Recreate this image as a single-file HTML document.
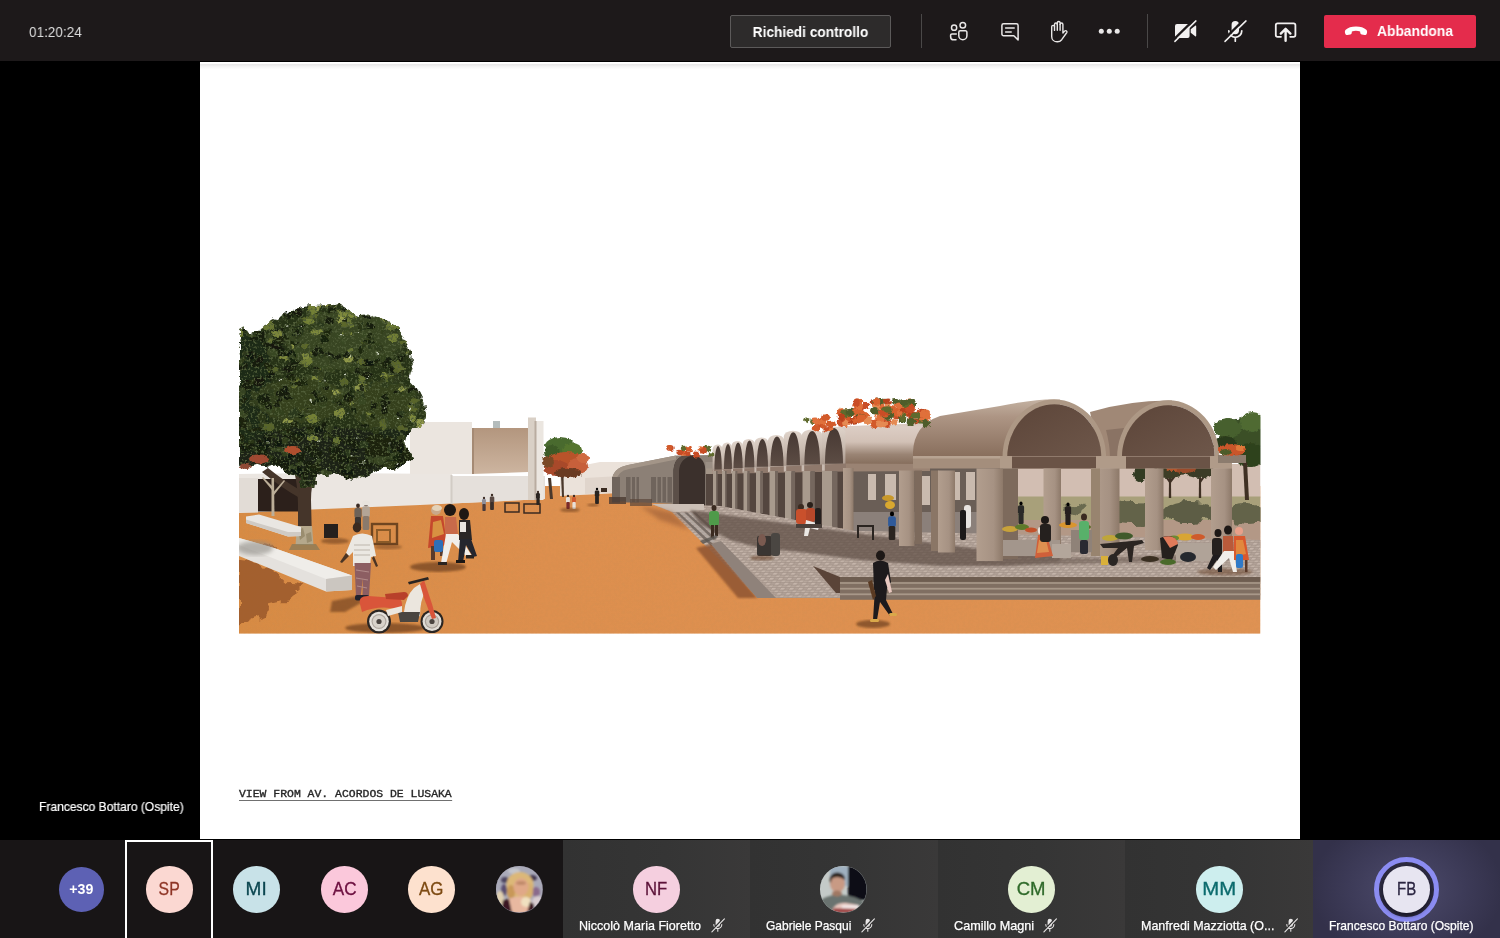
<!DOCTYPE html>
<html lang="it">
<head>
<meta charset="utf-8">
<title>Riunione</title>
<style>
*{box-sizing:border-box;margin:0;padding:0}
html,body{width:1500px;height:938px;overflow:hidden;background:#000}
body{font-family:"Liberation Sans","DejaVu Sans",sans-serif;color:#fff;position:relative}
#top{position:absolute;left:0;top:0;width:1500px;height:61.200px;background:#1d191a}
#time{position:absolute;left:28.600px;top:24.030px;font-size:15.200px;line-height:1;color:#dcdcdc;transform:scaleX(.892);transform-origin:0 0;white-space:nowrap}
#req{position:absolute;left:730px;top:14.500px;width:161px;height:33px;border:1px solid #5c5a5a;background:#2d2b2b;border-radius:2px}
#req span{position:absolute;left:0;top:8.530px;width:159px;text-align:center;font-size:15.080px;font-weight:bold;line-height:1;color:#fff;transform:scaleX(.908);white-space:nowrap}
.sep{position:absolute;top:14px;width:1px;height:34px;background:#4a4848}
.ico{position:absolute;top:19px;width:24px;height:24px}
#leave{position:absolute;left:1324px;top:14.500px;width:152px;height:33px;background:#e42c4c;border-radius:2px}
#leave span{position:absolute;left:53px;top:9.780px;font-size:14.200px;font-weight:bold;line-height:1;color:#fff;transform:scaleX(.973);transform-origin:0 0;white-space:nowrap}
#stage{position:absolute;left:0;top:61px;width:1500px;height:779px;background:#000}
#slide{position:absolute;left:199.700px;top:62.400px;width:1100.200px;height:776.800px;background:linear-gradient(#fff 0,#fff 1.400px,#e8e8e8 2.600px,#f4f4f4 4.500px,#fff 7.500px)}
#presenter{-webkit-text-stroke:.2px #fff;position:absolute;left:39.300px;top:801.400px;font-size:12.600px;line-height:1;color:#fff;transform:scaleX(.957);transform-origin:0 0;white-space:nowrap}
#cap{position:absolute;left:238.900px;top:789.100px;height:11.750px;-webkit-text-stroke:.35px #262626;font-family:"Liberation Mono","DejaVu Sans Mono",monospace;font-size:10.900px;line-height:1;color:#262626;transform:scaleX(1.050);transform-origin:0 0;white-space:nowrap;border-bottom:1.200px solid #707070;will-change:transform}
#strip{position:absolute;left:0;top:839.500px;width:1500px;height:98.500px;background:#181516}
.tile{position:absolute;top:0;width:187.5px;height:98.500px;background:linear-gradient(90deg,#323232 0,#353535 55%,#3a3939 100%)}
.av{position:absolute;width:46.500px;height:46.500px;border-radius:50%;top:26.100px;font-size:18.200px;-webkit-text-stroke:.3px currentColor;line-height:46.500px;text-align:center}
.av b{display:inline-block;font-weight:normal}
.nm{-webkit-text-stroke:.25px #fff;position:absolute;left:16px;top:80.600px;font-size:12.600px;line-height:1;color:#fff;white-space:nowrap}
.nm span{display:inline-block;transform-origin:0 0}

#sel{position:absolute;left:124.800px;top:0;width:87.800px;height:98.500px;border:2px solid #fff;border-bottom:none}
#fb{background:radial-gradient(ellipse 95px 75px at 94px 49px,#4d4b6c 0%,#3d3b58 60%,#33314a 100%)}
#ring{position:absolute;left:61.500px;top:17.500px;width:65px;height:65px;border-radius:50%;border:5px solid #8b8cf2;background:#2c2a40}
.m{position:absolute;top:-2.200px;margin-left:-16px}
#time,#req span,#leave span,#presenter,.nm,.av{will-change:transform}
</style>
</head>
<body>
<div id="stage"></div>
<div id="slide"></div>
<!--SCENE--><svg id="scene" width="1500" height="938" viewBox="0 0 1500 938" style="position:absolute;left:0;top:0"><defs>
<clipPath id="imgclip"><rect x="239" y="296" width="1021.5" height="337.8"/></clipPath>
<linearGradient id="gnd" x1="0" y1="0" x2="1" y2="0"><stop offset="0" stop-color="#d78b44"/><stop offset=".3" stop-color="#dd8f4e"/><stop offset="1" stop-color="#df9253"/></linearGradient>
<linearGradient id="vault" x1="0" y1="0" x2="0" y2="1"><stop offset="0" stop-color="#c4b2a2"/><stop offset=".3" stop-color="#ad9584"/><stop offset="1" stop-color="#876d5b"/></linearGradient>
<linearGradient id="roof" x1="0" y1="0" x2="0" y2="1"><stop offset="0" stop-color="#d6c6bb"/><stop offset=".1" stop-color="#dccdc4"/><stop offset=".45" stop-color="#d2c1b6"/><stop offset=".75" stop-color="#9a8474"/><stop offset="1" stop-color="#846c5a"/></linearGradient>
<linearGradient id="face" x1="0" y1="0" x2="0" y2="1"><stop offset="0" stop-color="#e0d4cb"/><stop offset=".5" stop-color="#c9bbb0"/><stop offset="1" stop-color="#a08f84"/></linearGradient>
<linearGradient id="archin" x1="0" y1="0" x2="0" y2="1"><stop offset="0" stop-color="#473933"/><stop offset="1" stop-color="#5c4c44"/></linearGradient>
<linearGradient id="inner" x1="0" y1="0" x2="1" y2="1"><stop offset="0" stop-color="#5c4539"/><stop offset="1" stop-color="#6e574a"/></linearGradient>
<linearGradient id="col" x1="0" y1="0" x2="1" y2="0"><stop offset="0" stop-color="#b29e8e"/><stop offset=".65" stop-color="#a69283"/><stop offset="1" stop-color="#8d7969"/></linearGradient>
<linearGradient id="tan" x1="0" y1="0" x2="0" y2="1"><stop offset="0" stop-color="#b3967e"/><stop offset="1" stop-color="#cdb5a0"/></linearGradient>
<filter id="leaf" x="-5%" y="-5%" width="110%" height="110%"><feTurbulence type="fractalNoise" baseFrequency=".16" numOctaves="2" seed="3" result="n"/><feDisplacementMap in="SourceGraphic" in2="n" scale="7" xChannelSelector="R" yChannelSelector="G"/></filter>
<filter id="leaf2" x="-10%" y="-10%" width="120%" height="120%"><feTurbulence type="fractalNoise" baseFrequency=".3" numOctaves="2" seed="5" result="n"/><feDisplacementMap in="SourceGraphic" in2="n" scale="4" xChannelSelector="R" yChannelSelector="G"/></filter>
<filter id="grain" x="0" y="0" width="100%" height="100%"><feTurbulence type="fractalNoise" baseFrequency=".35" numOctaves="2" seed="11"/><feColorMatrix type="matrix" values="0 0 0 0 .55  0 0 0 0 .28  0 0 0 0 .1  0 0 0 1.200 -.5"/></filter>
<filter id="speck" x="0" y="0" width="100%" height="100%"><feTurbulence type="fractalNoise" baseFrequency=".45" numOctaves="2" seed="9"/><feColorMatrix type="matrix" values="0 0 0 0 .08  0 0 0 0 .11  0 0 0 0 .04  0 0 0 5 -2.600"/></filter>
<filter id="dapple" x="-10%" y="-10%" width="120%" height="120%"><feTurbulence type="fractalNoise" baseFrequency=".09" numOctaves="2" seed="4" result="n"/><feDisplacementMap in="SourceGraphic" in2="n" scale="14" xChannelSelector="R" yChannelSelector="G"/><feGaussianBlur stdDeviation=".7"/></filter>
<filter id="blur2"><feGaussianBlur stdDeviation="2"/></filter>
<filter id="blur1"><feGaussianBlur stdDeviation="1"/></filter>
<filter id="blur05"><feGaussianBlur stdDeviation=".5"/></filter>
<pattern id="tiles" width="9" height="5" patternUnits="userSpaceOnUse" patternTransform="skewX(-35)"><rect width="9" height="5" fill="#8f7f76"/><rect x=".3" y=".3" width="4.200" height="2.100" fill="#c6b6ab"/><rect x="4.800" y=".3" width="4" height="2.100" fill="#b5a59a"/><rect x=".3" y="2.700" width="4.200" height="2.100" fill="#ad9d93"/><rect x="4.800" y="2.700" width="4" height="2.100" fill="#cbbbb0"/></pattern>
</defs><g clip-path="url(#imgclip)"><rect x="239.0" y="486.0" width="1021.5" height="147.8" fill="url(#gnd)" /><rect x="239.0" y="486.0" width="1021.5" height="147.8" fill="#000" filter="url(#grain)" opacity=".3"/><polygon points="560.0,470.0 600.0,462.0 640.0,462.0 640.0,492.0 560.0,496.0" fill="#ebe2da" /><polygon points="585.0,478.0 620.0,476.0 620.0,492.0 585.0,494.0" fill="#e0d5cc" /><polygon points="239.0,474.0 330.0,473.0 452.0,474.0 452.0,476.0 545.0,476.0 545.0,499.0 420.0,505.0 300.0,510.0 239.0,513.0" fill="#ebe6e1" /><polygon points="452.0,476.0 545.0,476.0 545.0,499.0 452.0,503.5" fill="#e5e0db" /><rect x="450.5" y="475.0" width="2.0" height="29.0" fill="#d2ccc5" /><polygon points="410.0,422.0 472.0,422.0 472.0,474.0 410.0,474.0" fill="#ebe5df" /><polygon points="472.0,428.0 528.0,428.0 528.0,472.0 472.0,474.0" fill="url(#tan)" /><rect x="472.0" y="428.0" width="2.0" height="46.0" fill="#a58a74" /><rect x="493.0" y="421.0" width="7.0" height="7.0" fill="#b4bcbc" /><rect x="528.0" y="417.5" width="8.0" height="82.5" fill="#d9d0c6" /><rect x="536.0" y="421.0" width="7.5" height="79.0" fill="#ebe6e0" /><rect x="534.5" y="421.0" width="2.0" height="79.0" fill="#b9aca0" /><rect x="258.0" y="479.0" width="42.0" height="32.5" fill="#2c201b" /><rect x="239.0" y="478.0" width="19.0" height="34.5" fill="#e2dcd6" /><path d="M612,501 L612,480 Q613,468 628,465 L676,455.500 L714,455 L714,506 L612,501 Z" fill="#8c8076" /><path d="M612,480 Q613,468 628,465 L676,455.500 L676,459.500 L629,469 Q617,471 616,482 Z" fill="#a39588" /><rect x="612.0" y="477.0" width="8.0" height="25.5" fill="#6f645c" /><rect x="626.0" y="477.0" width="13.0" height="25.5" fill="#6f645c" /><rect x="651.0" y="477.0" width="21.0" height="25.5" fill="#6f645c" /><rect x="630.5" y="477.0" width="1.5" height="25.5" fill="#8c8076" /><rect x="635.0" y="477.0" width="1.5" height="25.5" fill="#8c8076" /><rect x="656.0" y="477.0" width="1.5" height="25.5" fill="#8c8076" /><rect x="661.0" y="477.0" width="1.5" height="25.5" fill="#8c8076" /><rect x="666.0" y="477.0" width="1.5" height="25.5" fill="#8c8076" /><path d="M673.500,505 L673.500,470 Q674.500,455 689.500,455 Q704.500,455 705.500,470 L705.500,506 Z" fill="#3b302c" /><path d="M673.500,505 L673.500,470 Q674.500,455 689.500,455 Q692,455 694,455.500 Q680,457 679,471 L679,505 Z" fill="#5b4f48" /><rect x="705.5" y="462.0" width="8.5" height="44.0" fill="#9a8e84" /><rect x="843.0" y="464.0" width="417.5" height="34.0" fill="#d2beb2" /><rect x="855.0" y="496.5" width="405.5" height="25.5" fill="#a8a07a" /><rect x="855.0" y="520.0" width="405.5" height="28.0" fill="#b39886" /><rect x="843.0" y="464.0" width="160.0" height="84.0" fill="#6a5e56" /><rect x="868.0" y="474.0" width="8.0" height="26.0" fill="#c9baae" filter="url(#blur05)"/><rect x="885.0" y="474.0" width="11.0" height="26.0" fill="#c9baae" filter="url(#blur05)"/><rect x="955.0" y="472.0" width="5.0" height="28.0" fill="#c9baae" filter="url(#blur05)"/><rect x="966.0" y="472.0" width="9.0" height="28.0" fill="#c9baae" filter="url(#blur05)"/><rect x="915.0" y="476.0" width="15.0" height="29.0" fill="#c9baae" filter="url(#blur05)"/><rect x="843.0" y="512.0" width="160.0" height="36.0" fill="#8b807a" /><g filter="url(#dapple)"><ellipse cx="1133.0" cy="513.0" rx="34.0" ry="11.0" fill="#63634a" /><ellipse cx="1190.0" cy="512.0" rx="26.0" ry="11.0" fill="#5d5d45" /><ellipse cx="1248.0" cy="514.0" rx="20.0" ry="10.0" fill="#63634a" /><ellipse cx="1076.0" cy="510.0" rx="10.0" ry="5.0" fill="#6a6a50" /></g><polygon points="838.0,426.5 930.0,423.0 918.0,465.0 838.0,464.0" fill="url(#roof)" /><polygon points="846.0,463.5 930.0,464.0 930.0,471.0 846.0,471.5" fill="#9a8373" /><polygon points="706.0,474.0 843.0,470.0 843.0,529.0 706.0,508.0" fill="#54463f" /><path d="M712.6,473.8 L712.6,449.0 Q713.3,444.8 717.5,444.5 Q721.7,444.8 722.5,448.5 L722.5,473.8 Z" fill="url(#face)" /><path d="M722.1,473.1 L722.1,447.1 Q722.8,442.8 726.9,442.5 Q731.1,442.8 731.8,446.6 L731.8,473.1 Z" fill="url(#face)" /><path d="M731.4,472.3 L731.4,445.8 Q732.3,441.3 737.1,441.0 Q742.0,441.3 742.9,445.2 L742.9,472.3 Z" fill="url(#face)" /><path d="M742.5,471.6 L742.5,443.9 Q743.4,439.3 748.6,439.0 Q753.9,439.3 754.8,443.4 L754.8,471.6 Z" fill="url(#face)" /><path d="M754.4,470.8 L754.4,442.5 Q755.4,437.8 761.4,437.5 Q767.3,437.8 768.4,442.0 L768.4,470.8 Z" fill="url(#face)" /><path d="M768.0,470.1 L768.0,440.1 Q769.2,435.3 776.1,435.0 Q783.0,435.3 784.2,439.6 L784.2,470.1 Z" fill="url(#face)" /><path d="M783.8,469.3 L783.8,436.1 Q785.2,431.1 792.9,430.8 Q800.6,431.1 802.0,435.6 L802.0,469.3 Z" fill="url(#face)" /><path d="M801.6,468.6 L801.6,434.9 Q803.1,429.8 812.0,429.5 Q820.8,429.8 822.4,434.4 L822.4,468.6 Z" fill="url(#face)" /><path d="M822.0,467.8 L822.0,432.0 Q823.8,426.8 833.7,426.5 Q843.6,426.8 845.4,431.5 L845.4,467.8 Z" fill="url(#face)" /><path d="M714.4,469.8 C714.4,455.0 716.1,446.0 718.1,446.0 C720.1,446.0 721.8,455.0 721.8,469.8 Z" fill="url(#archin)" /><path d="M724.0,469.1 C724.0,453.5 725.8,444.0 728.0,444.0 C730.2,444.0 732.0,453.5 732.0,469.1 Z" fill="url(#archin)" /><path d="M733.5,468.3 C733.5,452.3 735.6,442.5 738.1,442.5 C740.6,442.5 742.7,452.3 742.7,468.3 Z" fill="url(#archin)" /><path d="M744.7,467.6 C744.7,450.8 746.9,440.5 749.5,440.5 C752.2,440.5 754.4,450.8 754.4,467.6 Z" fill="url(#archin)" /><path d="M756.8,466.8 C756.8,449.6 759.3,439.0 762.4,439.0 C765.5,439.0 768.0,449.6 768.0,466.8 Z" fill="url(#archin)" /><path d="M770.5,466.1 C770.5,447.7 773.4,436.5 777.0,436.5 C780.6,436.5 783.5,447.7 783.5,466.1 Z" fill="url(#archin)" /><path d="M786.5,465.3 C786.5,444.8 789.5,432.3 793.2,432.3 C797.0,432.3 800.0,444.8 800.0,465.3 Z" fill="url(#archin)" /><path d="M804.4,464.6 C804.4,443.7 807.9,431.0 812.2,431.0 C816.5,431.0 820.0,443.7 820.0,464.6 Z" fill="url(#archin)" /><path d="M825.0,463.8 C825.0,441.6 829.0,428.0 834.0,428.0 C839.0,428.0 843.0,441.6 843.0,463.8 Z" fill="url(#archin)" /><polygon points="706.0,468.5 712.0,468.5 712.0,474.0 706.0,474.0" fill="#a39588" /><polygon points="712.0,470.0 846.0,463.5 846.0,471.5 712.0,474.0" fill="#8f796c" /><rect x="712.6" y="470.3" width="1.2" height="3.5" fill="#c8bab0" /><rect x="722.1" y="469.6" width="1.4" height="3.9" fill="#c8bab0" /><rect x="731.4" y="468.8" width="1.6" height="4.2" fill="#c8bab0" /><rect x="742.5" y="468.1" width="1.8" height="4.6" fill="#c8bab0" /><rect x="754.4" y="467.3" width="2.0" height="5.0" fill="#c8bab0" /><rect x="768.0" y="466.6" width="2.2" height="5.4" fill="#c8bab0" /><rect x="783.8" y="465.8" width="2.4" height="5.8" fill="#c8bab0" /><rect x="801.6" y="465.1" width="2.6" height="6.1" fill="#c8bab0" /><rect x="822.0" y="464.3" width="2.8" height="6.5" fill="#c8bab0" /><rect x="713.0" y="471.0" width="3.0" height="36.0" fill="#a89a8d" /><rect x="716.0" y="471.0" width="1.6" height="35.0" fill="#75675e" /><rect x="722.0" y="471.0" width="3.0" height="37.0" fill="#a89a8d" /><rect x="725.0" y="471.0" width="1.6" height="36.0" fill="#75675e" /><rect x="732.0" y="471.0" width="3.5" height="39.0" fill="#a89a8d" /><rect x="735.5" y="471.0" width="1.9" height="38.0" fill="#75675e" /><rect x="743.5" y="471.0" width="4.0" height="41.0" fill="#a89a8d" /><rect x="747.5" y="471.0" width="2.2" height="40.0" fill="#75675e" /><rect x="756.0" y="471.0" width="4.5" height="43.0" fill="#a89a8d" /><rect x="760.5" y="471.0" width="2.5" height="42.0" fill="#75675e" /><rect x="769.5" y="471.0" width="5.5" height="46.0" fill="#a89a8d" /><rect x="775.0" y="471.0" width="3.0" height="45.0" fill="#75675e" /><rect x="785.0" y="471.0" width="6.5" height="49.0" fill="#a89a8d" /><rect x="791.5" y="471.0" width="3.6" height="48.0" fill="#75675e" /><rect x="802.5" y="471.0" width="8.0" height="53.0" fill="#a89a8d" /><rect x="810.5" y="471.0" width="4.4" height="52.0" fill="#75675e" /><rect x="822.0" y="471.0" width="10.0" height="58.0" fill="#a89a8d" /><rect x="832.0" y="471.0" width="5.5" height="57.0" fill="#75675e" /><rect x="843.0" y="468.0" width="10.5" height="67.5" fill="url(#col)" /><g filter="url(#leaf2)"><ellipse cx="1243.0" cy="440.0" rx="24.0" ry="22.0" fill="#3a4f28" /><ellipse cx="1228.0" cy="428.0" rx="14.0" ry="10.0" fill="#46602e" /><ellipse cx="1252.0" cy="422.0" rx="12.0" ry="10.0" fill="#4f6a33" /><ellipse cx="1250.0" cy="455.0" rx="16.0" ry="12.0" fill="#2f421d" /><ellipse cx="1225.0" cy="445.0" rx="12.0" ry="9.0" fill="#2a3b1a" /></g><path d="M1243,462 L1247,462 L1249,500 L1245,500 Z" fill="#3f3024" /><path d="M1169,478 L1171,478 L1171.2,498 L1168.8,498 Z" fill="#3f3024" /><path d="M1199,478 L1201,478 L1201.2,498 L1198.8,498 Z" fill="#3f3024" /><path d="M1170,484 L1163,474 L1164,473 L1171,481 Z M1200,484 L1207,474 L1206,473 L1199,481 Z M1170,484 L1177,475 L1176,474 L1169,481 Z" fill="#3f3024" /><g filter="url(#leaf2)"><ellipse cx="1168.0" cy="472.0" rx="17.0" ry="6.0" fill="#3c3d26" /><ellipse cx="1200.0" cy="472.0" rx="15.0" ry="6.0" fill="#3a3b25" /><ellipse cx="1184.0" cy="469.0" rx="12.0" ry="4.0" fill="#9c4c2a" /><ellipse cx="1172.0" cy="468.0" rx="6.0" ry="3.0" fill="#b5582e" /><ellipse cx="1140.0" cy="474.0" rx="7.0" ry="8.0" fill="#333a22" /></g><path d="M913,452 Q914,425 940,416 L1000,406 Q1040,398 1060,399.500 L1060,458 L913,458 Z" fill="url(#vault)" /><path d="M1090,412 Q1130,400 1172,400.500 L1172,458 L1100,458 Z" fill="#a08876" /><path d="M1106,430 Q1110,445 1110,458 L1122,458 Q1120,440 1124,428 Z" fill="#8a7364" /><path d="M1002.5,457.5 A51.8,58.0 0 0 1 1106.1,457.5 L1101.3,457.5 A47.0,53.2 0 0 0 1007.3,457.5 Z" fill="#ad9885" /><path d="M1007.3,457.5 A47.0,53.2 0 0 1 1101.3,457.5 Z" fill="url(#inner)" /><path d="M1117.1,457.5 A51.2,57.2 0 0 1 1219.5,457.5 L1214.7,457.5 A46.4,52.4 0 0 0 1121.9,457.5 Z" fill="#ad9885" /><path d="M1121.9,457.5 A46.4,52.4 0 0 1 1214.7,457.5 Z" fill="url(#inner)" /><rect x="913.0" y="456.0" width="319.0" height="12.5" fill="#a48e7c" /><rect x="913.0" y="456.0" width="319.0" height="2.5" fill="#b7a392" /><rect x="1012.0" y="456.5" width="84.0" height="12.0" fill="#6a5346" /><rect x="1126.0" y="456.5" width="84.0" height="12.0" fill="#6a5346" /><rect x="1000.0" y="456.0" width="12.0" height="12.5" fill="#b09b89" /><rect x="1096.0" y="456.0" width="30.0" height="12.5" fill="#b09b89" /><rect x="1210.0" y="456.0" width="22.0" height="12.5" fill="#b09b89" /><rect x="1218.0" y="455.0" width="28.0" height="8.0" fill="#8c7c6e" /><g filter="url(#leaf2)"><ellipse cx="1232.0" cy="450.0" rx="14.0" ry="6.0" fill="#c9562a" /><ellipse cx="1226.0" cy="452.0" rx="6.0" ry="3.0" fill="#4d5c2a" /><ellipse cx="1240.0" cy="448.0" rx="5.0" ry="3.0" fill="#e07a3a" /></g><polygon points="652.0,504.0 720.0,506.0 855.0,531.0 1260.5,540.0 1260.5,577.0 840.0,577.0 840.0,598.0 758.0,598.0 672.0,512.0" fill="#b7a79d" /><polygon points="652.0,504.0 720.0,506.0 855.0,531.0 1260.5,540.0 1260.5,577.0 840.0,577.0 840.0,598.0 758.0,598.0 672.0,512.0" fill="url(#tiles)" opacity=".7"/><polygon points="652.0,504.0 704.0,504.0 704.0,510.0 673.0,512.0" fill="#cbbfb6" /><polygon points="676.0,512.5 679.0,512.5 714.0,545.0 711.0,546.0" fill="#6a625d" opacity=".8"/><polygon points="680.2,512.5 683.2,512.5 715.3,542.1 712.3,543.1" fill="#b0a8a2" opacity=".8"/><polygon points="684.4,512.5 687.4,512.5 716.5,539.1 713.5,540.1" fill="#6a625d" opacity=".8"/><polygon points="688.6,512.5 691.6,512.5 717.8,536.2 714.8,537.2" fill="#b0a8a2" opacity=".8"/><polygon points="692.8,512.5 695.8,512.5 719.0,533.2 716.0,534.2" fill="#6a625d" opacity=".8"/><g filter="url(#blur1)" opacity=".7"><polygon points="690.0,510.0 855.0,533.0 1003.0,552.0 1060.0,556.0 1060.0,562.0 1003.0,566.0 940.0,566.0 860.0,560.0 800.0,552.0 760.0,548.0 730.0,540.0 700.0,524.0" fill="#5c4b43" /><polygon points="1003.0,556.0 1100.0,558.0 1150.0,556.0 1232.0,554.0 1232.0,560.0 1003.0,566.0" fill="#5c4b43" opacity=".7"/></g><polygon points="696.0,548.0 712.0,544.0 757.0,598.0 738.0,598.0" fill="#8f5430" filter="url(#blur1)" opacity=".85"/><polygon points="640.0,506.0 672.0,512.0 690.0,530.0 660.0,520.0" fill="#9a5c36" filter="url(#blur2)" opacity=".6"/><polygon points="711.0,544.0 721.0,541.0 776.0,598.0 757.0,598.0" fill="#8f827a" /><polygon points="813.0,566.0 840.0,577.0 840.0,593.0 836.0,593.0" fill="#5a4438" /><rect x="840.0" y="577.0" width="420.5" height="22.8" fill="#806f62" /><rect x="840.0" y="582.2" width="420.5" height="1.6" fill="#a89889" /><rect x="840.0" y="587.8" width="420.5" height="1.8" fill="#a89889" /><rect x="840.0" y="593.4" width="420.5" height="1.8" fill="#a89889" /><rect x="840.0" y="577.0" width="420.5" height="4.8" fill="#6e5d50" /><rect x="976.5" y="468.5" width="26.5" height="92.5" fill="url(#col)" /><rect x="1003.0" y="468.5" width="15.0" height="90.5" fill="#7d6a5c" /><rect x="1043.5" y="468.5" width="17.5" height="79.5" fill="url(#col)" /><rect x="1091.0" y="468.5" width="28.5" height="87.5" fill="url(#col)" /><rect x="1091.0" y="468.5" width="9.0" height="87.5" fill="#98846f" /><rect x="1145.0" y="468.5" width="18.5" height="81.5" fill="url(#col)" /><rect x="1211.0" y="468.5" width="21.0" height="83.5" fill="url(#col)" /><rect x="899.0" y="470.5" width="15.5" height="75.5" fill="url(#col)" /><rect x="914.5" y="470.5" width="7.5" height="73.5" fill="#7d6a5c" /><rect x="931.0" y="470.5" width="8.0" height="80.5" fill="#8a7666" /><rect x="938.0" y="470.5" width="17.0" height="82.0" fill="url(#col)" /><rect x="1003.0" y="540.0" width="57.0" height="16.0" fill="#a3968c" /><rect x="1052.0" y="544.0" width="19.0" height="14.0" fill="#b3a69b" /><rect x="1071.0" y="530.0" width="21.0" height="22.0" fill="#8f8278" /><rect x="1176.0" y="543.0" width="37.0" height="18.0" fill="#b0a398" /><ellipse cx="1010.0" cy="529.0" rx="8.0" ry="3.0" fill="#c8a23a" /><ellipse cx="1022.0" cy="527.0" rx="7.0" ry="3.0" fill="#5d7a2c" /><ellipse cx="1031.0" cy="530.0" rx="6.0" ry="2.5" fill="#c2512a" /><ellipse cx="1068.0" cy="525.0" rx="9.0" ry="3.0" fill="#d9952f" /><ellipse cx="1085.0" cy="527.0" rx="6.0" ry="2.5" fill="#5b6d2a" /><ellipse cx="1110.0" cy="538.0" rx="8.0" ry="3.0" fill="#bfa63a" /><ellipse cx="1124.0" cy="536.0" rx="9.0" ry="3.5" fill="#3f5a2a" /><ellipse cx="1185.0" cy="537.0" rx="9.0" ry="3.5" fill="#d8a534" /><ellipse cx="1198.0" cy="537.0" rx="7.0" ry="3.0" fill="#cf5a2b" /><ellipse cx="1174.0" cy="538.0" rx="5.0" ry="2.5" fill="#6c8a33" /><path d="M1100,544 L1142,540 L1144,543 L1134,546 L1132,562 L1129,562 L1127,548 L1112,560 L1109,560 L1118,548 L1103,548 Z" fill="#2b2522" /><g filter="url(#leaf2)"><ellipse cx="879.8" cy="413.9" rx="4.4" ry="4.2" fill="#e58a52" /><ellipse cx="856.7" cy="419.5" rx="4.9" ry="4.1" fill="#e58a52" /><ellipse cx="848.0" cy="419.6" rx="4.8" ry="3.3" fill="#d25a2c" /><ellipse cx="879.9" cy="418.0" rx="4.9" ry="4.2" fill="#e0703a" /><ellipse cx="917.4" cy="414.8" rx="4.0" ry="3.7" fill="#e58a52" /><ellipse cx="857.2" cy="406.4" rx="4.5" ry="3.8" fill="#d9622f" /><ellipse cx="880.2" cy="407.4" rx="5.1" ry="3.1" fill="#c94e27" /><ellipse cx="860.2" cy="407.6" rx="4.7" ry="2.7" fill="#c94e27" /><ellipse cx="900.3" cy="405.9" rx="4.4" ry="4.5" fill="#d25a2c" /><ellipse cx="875.0" cy="402.7" rx="5.3" ry="3.0" fill="#b8421f" /><ellipse cx="924.8" cy="418.4" rx="3.4" ry="3.9" fill="#c94e27" /><ellipse cx="841.0" cy="411.7" rx="3.5" ry="3.6" fill="#e58a52" /><ellipse cx="879.4" cy="405.4" rx="4.3" ry="3.3" fill="#e0703a" /><ellipse cx="874.7" cy="423.8" rx="3.8" ry="4.4" fill="#d25a2c" /><ellipse cx="910.7" cy="408.0" rx="3.6" ry="3.3" fill="#d25a2c" /><ellipse cx="915.2" cy="415.8" rx="3.1" ry="2.8" fill="#c94e27" /><ellipse cx="878.9" cy="401.2" rx="5.5" ry="3.3" fill="#4f5d2a" /><ellipse cx="896.0" cy="401.4" rx="4.1" ry="3.4" fill="#4f5d2a" /><ellipse cx="924.4" cy="412.1" rx="5.6" ry="2.9" fill="#e0703a" /><ellipse cx="853.6" cy="421.9" rx="5.2" ry="2.8" fill="#b8421f" /><ellipse cx="895.4" cy="413.7" rx="5.6" ry="3.7" fill="#5f6b2d" /><ellipse cx="877.1" cy="403.4" rx="4.5" ry="3.0" fill="#d25a2c" /><ellipse cx="905.1" cy="410.0" rx="5.5" ry="3.7" fill="#5f6b2d" /><ellipse cx="865.8" cy="405.0" rx="3.4" ry="3.5" fill="#c94e27" /><ellipse cx="897.5" cy="415.2" rx="3.8" ry="4.3" fill="#c94e27" /><ellipse cx="858.0" cy="401.4" rx="4.2" ry="3.0" fill="#d9622f" /><ellipse cx="886.7" cy="423.4" rx="4.1" ry="4.3" fill="#c94e27" /><ellipse cx="926.3" cy="416.1" rx="4.8" ry="4.3" fill="#e0703a" /><ellipse cx="881.8" cy="409.2" rx="5.9" ry="2.5" fill="#d9622f" /><ellipse cx="896.0" cy="412.1" rx="4.0" ry="4.5" fill="#d9622f" /><ellipse cx="846.6" cy="413.6" rx="5.7" ry="4.0" fill="#d25a2c" /><ellipse cx="901.9" cy="419.2" rx="4.1" ry="3.9" fill="#4f5d2a" /><ellipse cx="919.3" cy="421.0" rx="5.8" ry="2.6" fill="#5f6b2d" /><ellipse cx="884.0" cy="401.3" rx="4.1" ry="2.5" fill="#5f6b2d" /><ellipse cx="876.6" cy="408.6" rx="4.3" ry="4.2" fill="#e58a52" /><ellipse cx="847.4" cy="418.3" rx="3.9" ry="2.7" fill="#d25a2c" /><ellipse cx="842.0" cy="423.0" rx="4.5" ry="3.7" fill="#c94e27" /><ellipse cx="899.7" cy="405.7" rx="5.3" ry="3.2" fill="#e0703a" /><ellipse cx="921.9" cy="412.5" rx="4.0" ry="3.8" fill="#b8421f" /><ellipse cx="857.5" cy="410.9" rx="5.6" ry="3.3" fill="#b8421f" /><ellipse cx="891.3" cy="408.3" rx="3.4" ry="3.2" fill="#e0703a" /><ellipse cx="845.6" cy="423.5" rx="3.3" ry="3.4" fill="#e0703a" /><ellipse cx="921.5" cy="420.1" rx="4.9" ry="3.5" fill="#5f6b2d" /><ellipse cx="867.8" cy="420.3" rx="4.0" ry="4.2" fill="#e58a52" /><ellipse cx="864.5" cy="415.0" rx="4.7" ry="3.1" fill="#d9622f" /><ellipse cx="909.7" cy="401.4" rx="4.2" ry="2.9" fill="#e0703a" /><ellipse cx="907.7" cy="407.1" rx="5.4" ry="4.5" fill="#e0703a" /><ellipse cx="887.1" cy="415.7" rx="5.9" ry="3.9" fill="#4f5d2a" /><ellipse cx="857.5" cy="411.9" rx="5.1" ry="4.0" fill="#e0703a" /><ellipse cx="887.1" cy="401.8" rx="3.8" ry="3.2" fill="#b8421f" /><ellipse cx="901.4" cy="413.0" rx="4.2" ry="4.1" fill="#e0703a" /><ellipse cx="922.1" cy="417.6" rx="4.4" ry="2.9" fill="#e0703a" /><ellipse cx="888.4" cy="416.0" rx="4.4" ry="3.8" fill="#4f5d2a" /><ellipse cx="858.0" cy="417.6" rx="3.6" ry="4.3" fill="#c94e27" /><ellipse cx="926.3" cy="423.5" rx="3.8" ry="3.9" fill="#4f5d2a" /><ellipse cx="841.4" cy="412.6" rx="4.3" ry="3.6" fill="#d25a2c" /><ellipse cx="907.6" cy="412.2" rx="3.7" ry="4.2" fill="#d25a2c" /><ellipse cx="877.7" cy="401.8" rx="5.1" ry="4.3" fill="#4f5d2a" /><ellipse cx="881.4" cy="424.0" rx="5.8" ry="3.5" fill="#e58a52" /><ellipse cx="859.5" cy="413.1" rx="5.5" ry="3.6" fill="#d9622f" /><ellipse cx="854.5" cy="412.8" rx="3.9" ry="3.3" fill="#d9622f" /><ellipse cx="914.4" cy="421.7" rx="3.9" ry="2.8" fill="#b8421f" /><ellipse cx="887.9" cy="407.3" rx="3.6" ry="3.6" fill="#e58a52" /><ellipse cx="884.3" cy="414.9" rx="4.6" ry="2.6" fill="#d25a2c" /><ellipse cx="920.7" cy="413.5" rx="4.5" ry="3.9" fill="#c94e27" /><ellipse cx="845.8" cy="413.4" rx="5.8" ry="4.1" fill="#5f6b2d" /><ellipse cx="875.6" cy="406.7" rx="3.4" ry="3.4" fill="#e58a52" /><ellipse cx="911.8" cy="421.7" rx="4.6" ry="2.7" fill="#e58a52" /><ellipse cx="876.9" cy="401.7" rx="3.4" ry="4.1" fill="#d9622f" /><ellipse cx="860.0" cy="416.8" rx="5.2" ry="3.0" fill="#4f5d2a" /><ellipse cx="883.9" cy="412.5" rx="5.6" ry="3.7" fill="#c94e27" /><ellipse cx="903.2" cy="417.1" rx="3.1" ry="3.8" fill="#5f6b2d" /><ellipse cx="912.6" cy="415.2" rx="5.6" ry="3.6" fill="#b8421f" /><ellipse cx="859.2" cy="406.0" rx="3.7" ry="4.0" fill="#e0703a" /><ellipse cx="911.3" cy="421.8" rx="4.8" ry="4.3" fill="#4f5d2a" /><ellipse cx="857.1" cy="418.9" rx="5.7" ry="2.8" fill="#b8421f" /><ellipse cx="861.1" cy="417.7" rx="4.2" ry="3.4" fill="#d9622f" /><ellipse cx="922.8" cy="413.5" rx="3.6" ry="3.8" fill="#e0703a" /><ellipse cx="910.3" cy="403.2" rx="5.7" ry="4.4" fill="#4f5d2a" /><ellipse cx="850.2" cy="412.6" rx="4.5" ry="3.9" fill="#4f5d2a" /><ellipse cx="856.6" cy="402.6" rx="3.1" ry="4.0" fill="#c94e27" /><ellipse cx="894.0" cy="421.8" rx="3.4" ry="2.9" fill="#e58a52" /><ellipse cx="857.9" cy="420.3" rx="5.8" ry="2.7" fill="#d9622f" /><ellipse cx="845.5" cy="422.9" rx="3.2" ry="2.7" fill="#e58a52" /><ellipse cx="874.4" cy="410.8" rx="4.3" ry="3.7" fill="#4f5d2a" /><ellipse cx="841.2" cy="417.1" rx="3.5" ry="3.4" fill="#b8421f" /><ellipse cx="905.1" cy="410.3" rx="4.8" ry="2.7" fill="#b8421f" /><ellipse cx="909.7" cy="408.4" rx="5.4" ry="3.9" fill="#c94e27" /><ellipse cx="915.7" cy="415.5" rx="4.7" ry="2.9" fill="#5f6b2d" /><ellipse cx="891.4" cy="408.8" rx="3.8" ry="2.7" fill="#d9622f" /><ellipse cx="905.4" cy="404.7" rx="3.4" ry="3.2" fill="#5f6b2d" /><ellipse cx="887.4" cy="409.5" rx="5.3" ry="3.3" fill="#5f6b2d" /><ellipse cx="903.6" cy="402.6" rx="3.9" ry="2.7" fill="#4f5d2a" /><ellipse cx="829.1" cy="428.9" rx="4.3" ry="2.1" fill="#e0703a" /><ellipse cx="830.6" cy="425.0" rx="3.2" ry="3.0" fill="#c94e27" /><ellipse cx="819.9" cy="421.7" rx="4.5" ry="3.0" fill="#d25a2c" /><ellipse cx="825.8" cy="428.8" rx="2.5" ry="2.9" fill="#c94e27" /><ellipse cx="812.7" cy="421.8" rx="2.6" ry="2.3" fill="#5f6b2d" /><ellipse cx="806.3" cy="420.1" rx="3.1" ry="2.5" fill="#5f6b2d" /><ellipse cx="831.1" cy="423.8" rx="4.5" ry="3.0" fill="#d25a2c" /><ellipse cx="820.3" cy="425.0" rx="4.4" ry="2.6" fill="#c94e27" /><ellipse cx="816.0" cy="428.6" rx="4.2" ry="2.8" fill="#d25a2c" /><ellipse cx="817.2" cy="422.9" rx="3.1" ry="2.6" fill="#e0703a" /><ellipse cx="815.5" cy="420.4" rx="3.8" ry="2.8" fill="#e0703a" /><ellipse cx="823.3" cy="426.0" rx="2.6" ry="3.2" fill="#d25a2c" /><ellipse cx="822.5" cy="421.9" rx="3.9" ry="2.1" fill="#e0703a" /><ellipse cx="825.5" cy="417.6" rx="4.5" ry="3.4" fill="#d25a2c" /><ellipse cx="703.1" cy="449.0" rx="3.6" ry="2.3" fill="#c94e27" /><ellipse cx="670.0" cy="447.9" rx="3.7" ry="2.9" fill="#c94e27" /><ellipse cx="711.1" cy="454.4" rx="3.4" ry="2.1" fill="#5f6b2d" /><ellipse cx="688.1" cy="448.8" rx="2.6" ry="2.5" fill="#d25a2c" /><ellipse cx="684.0" cy="448.3" rx="3.1" ry="2.6" fill="#5f6b2d" /><ellipse cx="684.0" cy="453.7" rx="3.7" ry="2.1" fill="#e0703a" /><ellipse cx="700.3" cy="449.1" rx="2.7" ry="2.9" fill="#e0703a" /><ellipse cx="680.1" cy="452.5" rx="3.6" ry="2.7" fill="#c94e27" /><ellipse cx="695.9" cy="453.8" rx="2.8" ry="2.2" fill="#c94e27" /><ellipse cx="706.7" cy="447.4" rx="2.6" ry="2.3" fill="#5f6b2d" /><ellipse cx="669.2" cy="447.3" rx="2.8" ry="2.3" fill="#d25a2c" /><ellipse cx="708.2" cy="448.4" rx="2.9" ry="3.0" fill="#5f6b2d" /><ellipse cx="689.1" cy="448.9" rx="3.0" ry="2.7" fill="#d25a2c" /><ellipse cx="703.3" cy="451.0" rx="3.7" ry="2.8" fill="#c94e27" /><ellipse cx="687.6" cy="453.7" rx="3.1" ry="2.2" fill="#c94e27" /><ellipse cx="696.8" cy="455.9" rx="3.0" ry="2.5" fill="#c94e27" /></g><path d="M548,478 L551,478 L553,499 L550,499 Z" fill="#4a382b" /><path d="M561,476 L563.500,476 L564,497 L562,497 Z" fill="#4a382b" /><g filter="url(#leaf2)"><ellipse cx="560.0" cy="446.0" rx="15.0" ry="9.0" fill="#4a6a2f" /><ellipse cx="572.0" cy="450.0" rx="10.0" ry="7.0" fill="#55752f" /><ellipse cx="552.0" cy="452.0" rx="8.0" ry="7.0" fill="#3e5a28" /><ellipse cx="566.0" cy="462.0" rx="20.0" ry="10.0" fill="#b9532c" /><ellipse cx="556.0" cy="468.0" rx="12.0" ry="8.0" fill="#a8482a" /><ellipse cx="578.0" cy="466.0" rx="10.0" ry="8.0" fill="#c7603a" /><ellipse cx="568.0" cy="473.0" rx="14.0" ry="5.0" fill="#6b3a22" /><ellipse cx="583.0" cy="458.0" rx="6.0" ry="5.0" fill="#cf6a40" /><ellipse cx="548.0" cy="462.0" rx="6.0" ry="6.0" fill="#7a4a28" /></g><g filter="url(#dapple)" opacity=".8"><polygon points="239.0,558.0 258.0,560.0 272.0,572.0 284.0,578.0 300.0,592.0 290.0,600.0 272.0,604.0 268.0,616.0 250.0,620.0 239.0,626.0" fill="#96552a" /><ellipse cx="258.0" cy="547.0" rx="16.0" ry="4.0" fill="#9a5a2e" /><ellipse cx="292.0" cy="586.0" rx="10.0" ry="4.0" fill="#96552a" /></g><path d="M294,470 Q298,488 298,505 L298,540 L312,540 L311,500 Q311,485 316,470 Z" fill="#45352a" /><path d="M262,472 Q282,488 298,497 L300,490 Q284,481 268,468 Z" fill="#45352a" /><path d="M297,526 L312,526 L313.500,545 L295.500,545 Z" fill="#b5a88c" /><path d="M298,530 L303,528 L305,536 L300,540 Z M306,534 L311,532 L312,541 L307,543 Z" fill="#8f8262" opacity=".7"/><path d="M292,544 L316,544 L320,550 L289,550 Z" fill="#8c7a58" opacity=".8"/><path d="M271.500,478 L274,478 L274.500,516 L271.500,516 Z" fill="#bcae98" /><path d="M272,490 L262,478 L263,477 L273,487 Z" fill="#bcae98" /><path d="M273.500,492 L284,480 L285,481 L274,495 Z" fill="#bcae98" /><clipPath id="canclip"><path d="M239.0,328.0 L244.0,326.0 L249.0,333.0 L257.0,332.0 L263.7,326.0 L278.6,317.3 L289.3,311.0 L304.2,306.7 L321.3,305.6 L338.3,303.5 L346.9,308.8 L355.4,315.5 L368.2,314.5 L385.3,319.5 L398.0,328.0 L404.4,338.6 L410.8,353.6 L413.0,366.4 L408.7,381.3 L417.2,389.8 L423.6,402.6 L426.8,415.4 L423.6,424.0 L413.0,428.2 L406.6,434.6 L404.4,445.3 L410.8,453.8 L413.0,458.0 L402.3,464.4 L395.9,470.8 L385.3,466.6 L372.5,473.0 L363.9,477.2 L351.1,479.4 L338.3,473.0 L325.6,475.1 L317.0,474.0 L314.9,488.0 L300.0,488.0 L300.0,477.0 L285.0,473.0 L278.6,464.4 L268.0,466.6 L257.3,464.4 L248.8,466.6 L239.0,466.6 Z"/></clipPath><g clip-path="url(#imgclip)"><g filter="url(#leaf)"><path d="M239.0,328.0 L244.0,326.0 L249.0,333.0 L257.0,332.0 L263.7,326.0 L278.6,317.3 L289.3,311.0 L304.2,306.7 L321.3,305.6 L338.3,303.5 L346.9,308.8 L355.4,315.5 L368.2,314.5 L385.3,319.5 L398.0,328.0 L404.4,338.6 L410.8,353.6 L413.0,366.4 L408.7,381.3 L417.2,389.8 L423.6,402.6 L426.8,415.4 L423.6,424.0 L413.0,428.2 L406.6,434.6 L404.4,445.3 L410.8,453.8 L413.0,458.0 L402.3,464.4 L395.9,470.8 L385.3,466.6 L372.5,473.0 L363.9,477.2 L351.1,479.4 L338.3,473.0 L325.6,475.1 L317.0,474.0 L314.9,488.0 L300.0,488.0 L300.0,477.0 L285.0,473.0 L278.6,464.4 L268.0,466.6 L257.3,464.4 L248.8,466.6 L239.0,466.6 Z" fill="#263017" /><g clip-path="url(#canclip)"><ellipse cx="320.0" cy="455.0" rx="90.0" ry="28.0" fill="#1b2412" opacity=".9"/><ellipse cx="250.0" cy="390.0" rx="22.0" ry="62.0" fill="#1f2914" opacity=".85"/><ellipse cx="395.0" cy="448.0" rx="30.0" ry="22.0" fill="#1b2412" opacity=".85"/><ellipse cx="345.0" cy="340.0" rx="60.0" ry="30.0" fill="#3f4b25" opacity=".8"/><ellipse cx="300.0" cy="400.0" rx="45.0" ry="22.0" fill="#3a4622" opacity=".7"/><ellipse cx="385.0" cy="405.0" rx="35.0" ry="25.0" fill="#3c4823" opacity=".7"/><ellipse cx="319.0" cy="368.7" rx="2.5" ry="2.0" fill="#5f6c2e" opacity=".9"/><ellipse cx="345.5" cy="390.2" rx="5.3" ry="1.8" fill="#11170a" opacity=".9"/><ellipse cx="296.2" cy="469.4" rx="4.1" ry="3.9" fill="#11170a" opacity=".9"/><ellipse cx="299.6" cy="464.0" rx="3.6" ry="2.1" fill="#3a4722" opacity=".9"/><ellipse cx="373.6" cy="405.9" rx="3.9" ry="4.0" fill="#11170a" opacity=".9"/><ellipse cx="295.1" cy="359.1" rx="2.5" ry="4.0" fill="#2b361a" opacity=".9"/><ellipse cx="240.7" cy="425.9" rx="5.0" ry="2.8" fill="#1b2310" opacity=".9"/><ellipse cx="311.7" cy="328.8" rx="2.9" ry="3.8" fill="#2b361a" opacity=".9"/><ellipse cx="406.9" cy="352.4" rx="2.4" ry="2.2" fill="#7a8638" opacity=".9"/><ellipse cx="293.4" cy="304.2" rx="2.4" ry="3.3" fill="#141b0c" opacity=".9"/><ellipse cx="388.9" cy="315.6" rx="5.6" ry="2.0" fill="#6f7c36" opacity=".9"/><ellipse cx="359.0" cy="326.8" rx="3.1" ry="2.4" fill="#141b0c" opacity=".9"/><ellipse cx="384.5" cy="397.0" rx="3.5" ry="4.0" fill="#141b0c" opacity=".9"/><ellipse cx="300.6" cy="325.4" rx="4.9" ry="4.3" fill="#33401f" opacity=".9"/><ellipse cx="315.7" cy="453.7" rx="5.3" ry="4.1" fill="#161d0d" opacity=".9"/><ellipse cx="408.4" cy="478.1" rx="4.9" ry="4.0" fill="#11170a" opacity=".9"/><ellipse cx="317.8" cy="378.2" rx="6.0" ry="2.8" fill="#85903f" opacity=".9"/><ellipse cx="268.5" cy="338.0" rx="3.2" ry="4.2" fill="#3a4722" opacity=".9"/><ellipse cx="327.5" cy="435.9" rx="5.1" ry="2.3" fill="#2b361a" opacity=".9"/><ellipse cx="248.1" cy="385.3" rx="3.4" ry="2.3" fill="#161d0d" opacity=".9"/><ellipse cx="305.7" cy="409.4" rx="4.5" ry="2.4" fill="#141b0c" opacity=".9"/><ellipse cx="271.9" cy="352.3" rx="4.6" ry="4.3" fill="#3a4722" opacity=".9"/><ellipse cx="342.8" cy="458.7" rx="5.7" ry="2.7" fill="#141b0c" opacity=".9"/><ellipse cx="342.2" cy="478.0" rx="3.7" ry="2.4" fill="#1b2310" opacity=".9"/><ellipse cx="262.1" cy="448.5" rx="5.2" ry="2.0" fill="#11170a" opacity=".9"/><ellipse cx="415.3" cy="465.9" rx="3.9" ry="2.5" fill="#11170a" opacity=".9"/><ellipse cx="317.8" cy="462.7" rx="2.8" ry="4.3" fill="#3a4722" opacity=".9"/><ellipse cx="393.1" cy="324.4" rx="4.2" ry="1.9" fill="#11170a" opacity=".9"/><ellipse cx="346.9" cy="333.2" rx="5.3" ry="2.0" fill="#85903f" opacity=".9"/><ellipse cx="288.4" cy="433.3" rx="4.8" ry="2.0" fill="#2f3a1c" opacity=".9"/><ellipse cx="381.2" cy="401.1" rx="5.2" ry="2.9" fill="#33401f" opacity=".9"/><ellipse cx="413.9" cy="316.9" rx="2.3" ry="2.9" fill="#1b2310" opacity=".9"/><ellipse cx="331.9" cy="476.1" rx="3.4" ry="2.0" fill="#11170a" opacity=".9"/><ellipse cx="295.3" cy="386.9" rx="2.5" ry="2.2" fill="#11170a" opacity=".9"/><ellipse cx="365.5" cy="425.7" rx="4.7" ry="1.8" fill="#161d0d" opacity=".9"/><ellipse cx="309.2" cy="432.1" rx="3.9" ry="1.8" fill="#33401f" opacity=".9"/><ellipse cx="428.4" cy="448.7" rx="3.3" ry="2.8" fill="#2b361a" opacity=".9"/><ellipse cx="340.7" cy="355.5" rx="4.3" ry="2.0" fill="#2f3a1c" opacity=".9"/><ellipse cx="272.6" cy="370.0" rx="5.8" ry="3.3" fill="#5f6c2e" opacity=".9"/><ellipse cx="376.4" cy="361.7" rx="2.6" ry="3.5" fill="#161d0d" opacity=".9"/><ellipse cx="261.5" cy="417.3" rx="3.7" ry="4.1" fill="#2b361a" opacity=".9"/><ellipse cx="351.0" cy="316.8" rx="6.0" ry="3.0" fill="#85903f" opacity=".9"/><ellipse cx="385.6" cy="363.5" rx="4.7" ry="3.9" fill="#1b2310" opacity=".9"/><ellipse cx="395.3" cy="371.8" rx="4.6" ry="3.8" fill="#2f3a1c" opacity=".9"/><ellipse cx="354.9" cy="359.1" rx="4.7" ry="3.4" fill="#1b2310" opacity=".9"/><ellipse cx="239.6" cy="361.6" rx="2.6" ry="2.8" fill="#2f3a1c" opacity=".9"/><ellipse cx="334.8" cy="446.7" rx="3.2" ry="3.3" fill="#1b2310" opacity=".9"/><ellipse cx="293.9" cy="343.5" rx="4.4" ry="2.3" fill="#1b2310" opacity=".9"/><ellipse cx="417.1" cy="485.7" rx="4.4" ry="1.9" fill="#1b2310" opacity=".9"/><ellipse cx="363.9" cy="444.5" rx="4.4" ry="3.7" fill="#2f3a1c" opacity=".9"/><ellipse cx="299.9" cy="472.8" rx="5.6" ry="3.0" fill="#141b0c" opacity=".9"/><ellipse cx="377.6" cy="344.4" rx="4.3" ry="2.5" fill="#33401f" opacity=".9"/><ellipse cx="412.4" cy="484.5" rx="2.7" ry="4.0" fill="#1b2310" opacity=".9"/><ellipse cx="292.0" cy="466.8" rx="5.4" ry="2.3" fill="#3a4722" opacity=".9"/><ellipse cx="342.3" cy="314.2" rx="5.2" ry="4.3" fill="#85903f" opacity=".9"/><ellipse cx="429.8" cy="325.7" rx="4.5" ry="3.5" fill="#141b0c" opacity=".9"/><ellipse cx="384.1" cy="329.5" rx="2.7" ry="2.8" fill="#33401f" opacity=".9"/><ellipse cx="346.5" cy="332.3" rx="3.1" ry="4.3" fill="#3a4722" opacity=".9"/><ellipse cx="246.4" cy="445.8" rx="3.7" ry="3.1" fill="#1b2310" opacity=".9"/><ellipse cx="255.9" cy="364.3" rx="5.1" ry="3.1" fill="#141b0c" opacity=".9"/><ellipse cx="429.0" cy="455.9" rx="5.3" ry="2.1" fill="#141b0c" opacity=".9"/><ellipse cx="258.2" cy="474.6" rx="3.8" ry="1.9" fill="#141b0c" opacity=".9"/><ellipse cx="412.0" cy="355.1" rx="5.0" ry="3.4" fill="#2f3a1c" opacity=".9"/><ellipse cx="381.9" cy="356.7" rx="3.1" ry="4.1" fill="#33401f" opacity=".9"/><ellipse cx="283.0" cy="462.4" rx="4.8" ry="3.2" fill="#141b0c" opacity=".9"/><ellipse cx="282.4" cy="357.0" rx="5.5" ry="4.5" fill="#2b361a" opacity=".9"/><ellipse cx="377.8" cy="462.1" rx="4.3" ry="2.2" fill="#2f3a1c" opacity=".9"/><ellipse cx="362.0" cy="378.4" rx="2.6" ry="3.9" fill="#6f7c36" opacity=".9"/><ellipse cx="260.0" cy="400.0" rx="3.3" ry="3.8" fill="#161d0d" opacity=".9"/><ellipse cx="240.6" cy="332.0" rx="5.3" ry="2.9" fill="#2f3a1c" opacity=".9"/><ellipse cx="305.2" cy="408.9" rx="3.9" ry="2.6" fill="#6f7c36" opacity=".9"/><ellipse cx="298.9" cy="326.6" rx="5.5" ry="2.3" fill="#141b0c" opacity=".9"/><ellipse cx="402.6" cy="428.8" rx="5.4" ry="2.8" fill="#5f6c2e" opacity=".9"/><ellipse cx="327.7" cy="332.0" rx="4.2" ry="2.4" fill="#1b2310" opacity=".9"/><ellipse cx="420.2" cy="481.6" rx="5.0" ry="2.6" fill="#11170a" opacity=".9"/><ellipse cx="410.7" cy="461.7" rx="3.5" ry="4.4" fill="#1b2310" opacity=".9"/><ellipse cx="387.1" cy="377.2" rx="2.7" ry="3.7" fill="#5f6c2e" opacity=".9"/><ellipse cx="288.2" cy="433.9" rx="5.2" ry="2.8" fill="#11170a" opacity=".9"/><ellipse cx="364.4" cy="464.5" rx="5.9" ry="4.2" fill="#1b2310" opacity=".9"/><ellipse cx="271.0" cy="342.0" rx="4.0" ry="2.0" fill="#6f7c36" opacity=".9"/><ellipse cx="413.9" cy="313.7" rx="4.5" ry="2.6" fill="#161d0d" opacity=".9"/><ellipse cx="284.7" cy="449.4" rx="6.0" ry="2.3" fill="#3a4722" opacity=".9"/><ellipse cx="270.8" cy="436.6" rx="6.0" ry="1.9" fill="#2b361a" opacity=".9"/><ellipse cx="325.6" cy="439.6" rx="2.4" ry="2.0" fill="#2f3a1c" opacity=".9"/><ellipse cx="386.7" cy="469.2" rx="5.2" ry="3.2" fill="#2f3a1c" opacity=".9"/><ellipse cx="334.1" cy="457.2" rx="4.5" ry="3.9" fill="#1b2310" opacity=".9"/><ellipse cx="257.7" cy="381.0" rx="5.2" ry="3.9" fill="#11170a" opacity=".9"/><ellipse cx="281.8" cy="391.0" rx="3.2" ry="2.3" fill="#2f3a1c" opacity=".9"/><ellipse cx="424.3" cy="309.8" rx="3.4" ry="3.4" fill="#2b361a" opacity=".9"/><ellipse cx="354.1" cy="449.9" rx="5.5" ry="1.9" fill="#11170a" opacity=".9"/><ellipse cx="258.2" cy="333.1" rx="4.6" ry="1.9" fill="#1b2310" opacity=".9"/><ellipse cx="318.5" cy="429.4" rx="5.1" ry="3.1" fill="#11170a" opacity=".9"/><ellipse cx="362.1" cy="395.0" rx="2.8" ry="3.7" fill="#2b361a" opacity=".9"/><ellipse cx="397.2" cy="446.3" rx="4.0" ry="3.7" fill="#9aa24e" opacity=".9"/><ellipse cx="372.5" cy="478.0" rx="2.7" ry="3.0" fill="#2b361a" opacity=".9"/><ellipse cx="380.5" cy="307.3" rx="2.7" ry="2.9" fill="#7a8638" opacity=".9"/><ellipse cx="293.8" cy="378.9" rx="4.8" ry="3.7" fill="#6f7c36" opacity=".9"/><ellipse cx="425.4" cy="413.9" rx="4.3" ry="2.5" fill="#33401f" opacity=".9"/><ellipse cx="325.5" cy="473.4" rx="5.8" ry="4.3" fill="#3a4722" opacity=".9"/><ellipse cx="278.4" cy="329.8" rx="5.0" ry="3.3" fill="#161d0d" opacity=".9"/><ellipse cx="412.9" cy="464.5" rx="4.0" ry="2.9" fill="#1b2310" opacity=".9"/><ellipse cx="399.6" cy="370.9" rx="3.8" ry="2.5" fill="#1b2310" opacity=".9"/><ellipse cx="389.9" cy="449.6" rx="3.0" ry="3.1" fill="#2f3a1c" opacity=".9"/><ellipse cx="295.9" cy="383.2" rx="5.5" ry="2.4" fill="#1b2310" opacity=".9"/><ellipse cx="310.3" cy="313.5" rx="5.8" ry="3.5" fill="#3a4722" opacity=".9"/><ellipse cx="336.7" cy="437.9" rx="3.2" ry="2.8" fill="#2b361a" opacity=".9"/><ellipse cx="265.8" cy="474.2" rx="4.9" ry="4.2" fill="#1b2310" opacity=".9"/><ellipse cx="240.0" cy="359.9" rx="5.4" ry="2.8" fill="#33401f" opacity=".9"/><ellipse cx="285.7" cy="463.4" rx="3.7" ry="2.4" fill="#11170a" opacity=".9"/><ellipse cx="243.9" cy="328.1" rx="3.0" ry="2.9" fill="#161d0d" opacity=".9"/><ellipse cx="328.9" cy="429.1" rx="3.4" ry="3.0" fill="#3a4722" opacity=".9"/><ellipse cx="309.1" cy="463.7" rx="3.7" ry="2.8" fill="#141b0c" opacity=".9"/><ellipse cx="404.0" cy="342.0" rx="4.5" ry="2.2" fill="#5f6c2e" opacity=".9"/><ellipse cx="400.6" cy="439.0" rx="5.3" ry="4.4" fill="#33401f" opacity=".9"/><ellipse cx="293.8" cy="424.7" rx="4.3" ry="2.8" fill="#1b2310" opacity=".9"/><ellipse cx="259.7" cy="444.1" rx="2.5" ry="3.0" fill="#11170a" opacity=".9"/><ellipse cx="312.1" cy="311.2" rx="3.3" ry="3.7" fill="#3a4722" opacity=".9"/><ellipse cx="279.0" cy="472.1" rx="3.5" ry="3.7" fill="#2b361a" opacity=".9"/><ellipse cx="337.0" cy="438.2" rx="4.0" ry="2.5" fill="#1b2310" opacity=".9"/><ellipse cx="401.5" cy="357.4" rx="2.7" ry="4.3" fill="#141b0c" opacity=".9"/><ellipse cx="413.0" cy="350.6" rx="4.0" ry="2.7" fill="#3a4722" opacity=".9"/><ellipse cx="285.2" cy="304.4" rx="4.3" ry="2.5" fill="#3a4722" opacity=".9"/><ellipse cx="365.6" cy="334.6" rx="5.8" ry="2.8" fill="#3a4722" opacity=".9"/><ellipse cx="347.8" cy="475.3" rx="4.6" ry="2.9" fill="#161d0d" opacity=".9"/><ellipse cx="316.6" cy="351.4" rx="3.7" ry="4.3" fill="#141b0c" opacity=".9"/><ellipse cx="243.4" cy="325.3" rx="4.1" ry="3.1" fill="#3a4722" opacity=".9"/><ellipse cx="240.1" cy="412.6" rx="4.8" ry="2.4" fill="#3a4722" opacity=".9"/><ellipse cx="236.2" cy="401.1" rx="4.3" ry="4.1" fill="#2b361a" opacity=".9"/><ellipse cx="384.5" cy="314.7" rx="3.2" ry="2.1" fill="#11170a" opacity=".9"/><ellipse cx="239.8" cy="449.8" rx="4.8" ry="4.4" fill="#2f3a1c" opacity=".9"/><ellipse cx="395.9" cy="329.7" rx="5.3" ry="2.6" fill="#2f3a1c" opacity=".9"/><ellipse cx="316.5" cy="368.2" rx="3.1" ry="2.5" fill="#141b0c" opacity=".9"/><ellipse cx="299.0" cy="333.1" rx="5.5" ry="4.5" fill="#2b361a" opacity=".9"/><ellipse cx="394.7" cy="464.7" rx="4.1" ry="3.6" fill="#2f3a1c" opacity=".9"/><ellipse cx="243.8" cy="415.6" rx="2.4" ry="2.5" fill="#2f3a1c" opacity=".9"/><ellipse cx="334.4" cy="448.1" rx="3.6" ry="3.6" fill="#3a4722" opacity=".9"/><ellipse cx="271.6" cy="459.2" rx="4.4" ry="2.9" fill="#2b361a" opacity=".9"/><ellipse cx="373.1" cy="415.9" rx="2.7" ry="2.8" fill="#1b2310" opacity=".9"/><ellipse cx="365.9" cy="343.0" rx="4.0" ry="3.7" fill="#6f7c36" opacity=".9"/><ellipse cx="389.4" cy="472.5" rx="3.8" ry="3.5" fill="#3a4722" opacity=".9"/><ellipse cx="313.0" cy="473.6" rx="2.8" ry="4.5" fill="#161d0d" opacity=".9"/><ellipse cx="404.9" cy="336.0" rx="3.7" ry="4.2" fill="#33401f" opacity=".9"/><ellipse cx="397.6" cy="459.1" rx="3.4" ry="4.0" fill="#33401f" opacity=".9"/><ellipse cx="398.7" cy="352.8" rx="5.1" ry="4.4" fill="#2f3a1c" opacity=".9"/><ellipse cx="311.5" cy="429.1" rx="3.9" ry="4.1" fill="#1b2310" opacity=".9"/><ellipse cx="343.9" cy="466.8" rx="2.7" ry="2.7" fill="#141b0c" opacity=".9"/><ellipse cx="239.7" cy="405.3" rx="3.2" ry="2.4" fill="#2f3a1c" opacity=".9"/><ellipse cx="329.5" cy="368.0" rx="2.8" ry="1.8" fill="#6f7c36" opacity=".9"/><ellipse cx="383.6" cy="424.7" rx="4.0" ry="4.5" fill="#5f6c2e" opacity=".9"/><ellipse cx="275.2" cy="461.3" rx="3.5" ry="3.3" fill="#141b0c" opacity=".9"/><ellipse cx="344.1" cy="340.0" rx="3.3" ry="4.3" fill="#3a4722" opacity=".9"/><ellipse cx="403.7" cy="484.9" rx="2.9" ry="1.9" fill="#161d0d" opacity=".9"/><ellipse cx="268.8" cy="322.1" rx="2.3" ry="3.3" fill="#5f6c2e" opacity=".9"/><ellipse cx="248.2" cy="386.6" rx="5.8" ry="1.8" fill="#161d0d" opacity=".9"/><ellipse cx="338.3" cy="450.7" rx="3.7" ry="4.0" fill="#141b0c" opacity=".9"/><ellipse cx="396.6" cy="442.8" rx="5.8" ry="3.1" fill="#161d0d" opacity=".9"/><ellipse cx="398.9" cy="376.0" rx="2.2" ry="2.2" fill="#161d0d" opacity=".9"/><ellipse cx="298.8" cy="434.7" rx="5.3" ry="2.8" fill="#11170a" opacity=".9"/><ellipse cx="359.8" cy="365.9" rx="4.5" ry="2.5" fill="#3a4722" opacity=".9"/><ellipse cx="277.4" cy="333.5" rx="4.3" ry="3.6" fill="#85903f" opacity=".9"/><ellipse cx="270.4" cy="319.7" rx="2.9" ry="1.9" fill="#5f6c2e" opacity=".9"/><ellipse cx="313.5" cy="309.7" rx="5.4" ry="3.9" fill="#7a8638" opacity=".9"/><ellipse cx="240.0" cy="332.5" rx="2.6" ry="4.5" fill="#7a8638" opacity=".9"/><ellipse cx="319.4" cy="479.1" rx="5.2" ry="4.2" fill="#2f3a1c" opacity=".9"/><ellipse cx="393.6" cy="313.0" rx="5.5" ry="3.9" fill="#3a4722" opacity=".9"/><ellipse cx="337.9" cy="301.9" rx="5.7" ry="1.9" fill="#2f3a1c" opacity=".9"/><ellipse cx="355.6" cy="364.1" rx="4.1" ry="3.3" fill="#2f3a1c" opacity=".9"/><ellipse cx="258.1" cy="455.8" rx="3.9" ry="3.1" fill="#141b0c" opacity=".9"/><ellipse cx="398.3" cy="393.3" rx="4.2" ry="1.9" fill="#33401f" opacity=".9"/><ellipse cx="357.7" cy="383.1" rx="5.7" ry="2.2" fill="#33401f" opacity=".9"/><ellipse cx="326.9" cy="484.7" rx="2.9" ry="3.1" fill="#11170a" opacity=".9"/><ellipse cx="343.0" cy="309.8" rx="2.6" ry="2.3" fill="#141b0c" opacity=".9"/><ellipse cx="415.2" cy="446.9" rx="5.2" ry="3.2" fill="#33401f" opacity=".9"/><ellipse cx="428.8" cy="312.1" rx="3.2" ry="4.0" fill="#11170a" opacity=".9"/><ellipse cx="324.1" cy="399.8" rx="4.1" ry="4.4" fill="#1b2310" opacity=".9"/><ellipse cx="282.3" cy="320.0" rx="5.5" ry="2.0" fill="#2f3a1c" opacity=".9"/><ellipse cx="332.4" cy="310.4" rx="5.2" ry="2.2" fill="#161d0d" opacity=".9"/><ellipse cx="307.0" cy="318.7" rx="5.8" ry="2.4" fill="#5f6c2e" opacity=".9"/><ellipse cx="292.0" cy="377.4" rx="5.4" ry="3.5" fill="#161d0d" opacity=".9"/><ellipse cx="410.9" cy="313.4" rx="4.2" ry="2.7" fill="#1b2310" opacity=".9"/><ellipse cx="421.7" cy="480.5" rx="3.6" ry="4.0" fill="#141b0c" opacity=".9"/><ellipse cx="371.8" cy="457.1" rx="4.8" ry="2.3" fill="#1b2310" opacity=".9"/><ellipse cx="260.8" cy="429.0" rx="3.3" ry="2.5" fill="#1b2310" opacity=".9"/><ellipse cx="302.7" cy="415.8" rx="6.0" ry="3.7" fill="#33401f" opacity=".9"/><ellipse cx="378.8" cy="367.0" rx="3.0" ry="2.0" fill="#2f3a1c" opacity=".9"/><ellipse cx="287.6" cy="369.7" rx="3.9" ry="3.2" fill="#11170a" opacity=".9"/><ellipse cx="418.7" cy="364.4" rx="4.1" ry="2.1" fill="#1b2310" opacity=".9"/><ellipse cx="259.9" cy="463.1" rx="4.8" ry="3.0" fill="#161d0d" opacity=".9"/><ellipse cx="417.1" cy="372.1" rx="3.9" ry="2.0" fill="#1b2310" opacity=".9"/><ellipse cx="317.3" cy="352.3" rx="3.3" ry="3.7" fill="#3a4722" opacity=".9"/><ellipse cx="366.4" cy="345.5" rx="4.5" ry="4.1" fill="#2b361a" opacity=".9"/><ellipse cx="311.3" cy="351.8" rx="2.6" ry="3.6" fill="#7a8638" opacity=".9"/><ellipse cx="323.9" cy="338.9" rx="3.6" ry="3.8" fill="#161d0d" opacity=".9"/><ellipse cx="365.8" cy="364.0" rx="4.7" ry="2.2" fill="#161d0d" opacity=".9"/><ellipse cx="250.1" cy="331.7" rx="4.7" ry="3.4" fill="#2f3a1c" opacity=".9"/><ellipse cx="424.3" cy="481.6" rx="3.8" ry="2.4" fill="#141b0c" opacity=".9"/><ellipse cx="341.0" cy="320.5" rx="4.7" ry="3.9" fill="#9aa24e" opacity=".9"/><ellipse cx="416.8" cy="396.3" rx="3.6" ry="2.2" fill="#2f3a1c" opacity=".9"/><ellipse cx="312.6" cy="438.0" rx="5.8" ry="3.7" fill="#85903f" opacity=".9"/><ellipse cx="388.5" cy="468.5" rx="5.1" ry="2.1" fill="#141b0c" opacity=".9"/><ellipse cx="326.9" cy="302.9" rx="2.6" ry="2.9" fill="#161d0d" opacity=".9"/><ellipse cx="344.9" cy="481.2" rx="3.3" ry="3.2" fill="#161d0d" opacity=".9"/><ellipse cx="260.2" cy="405.6" rx="4.1" ry="2.6" fill="#33401f" opacity=".9"/><ellipse cx="304.4" cy="345.7" rx="2.4" ry="2.4" fill="#2f3a1c" opacity=".9"/><ellipse cx="323.6" cy="403.8" rx="5.3" ry="3.2" fill="#33401f" opacity=".9"/><ellipse cx="263.9" cy="405.0" rx="3.8" ry="1.8" fill="#33401f" opacity=".9"/><ellipse cx="265.8" cy="452.2" rx="2.8" ry="3.2" fill="#141b0c" opacity=".9"/><ellipse cx="241.5" cy="320.5" rx="3.7" ry="2.6" fill="#33401f" opacity=".9"/><ellipse cx="277.6" cy="399.8" rx="3.4" ry="3.1" fill="#141b0c" opacity=".9"/><ellipse cx="362.9" cy="464.9" rx="3.7" ry="2.6" fill="#161d0d" opacity=".9"/><ellipse cx="379.4" cy="348.0" rx="5.2" ry="2.8" fill="#2f3a1c" opacity=".9"/><ellipse cx="361.9" cy="362.1" rx="5.4" ry="2.0" fill="#5f6c2e" opacity=".9"/><ellipse cx="338.4" cy="401.8" rx="4.8" ry="3.7" fill="#2b361a" opacity=".9"/><ellipse cx="242.3" cy="366.9" rx="5.0" ry="2.8" fill="#141b0c" opacity=".9"/><ellipse cx="351.1" cy="319.5" rx="5.9" ry="2.8" fill="#3a4722" opacity=".9"/><ellipse cx="352.0" cy="368.6" rx="3.4" ry="3.1" fill="#33401f" opacity=".9"/><ellipse cx="336.1" cy="440.2" rx="3.0" ry="3.4" fill="#6f7c36" opacity=".9"/><ellipse cx="392.7" cy="475.5" rx="3.7" ry="2.6" fill="#11170a" opacity=".9"/><ellipse cx="367.9" cy="315.9" rx="3.4" ry="2.7" fill="#11170a" opacity=".9"/><ellipse cx="395.0" cy="446.6" rx="6.0" ry="3.1" fill="#161d0d" opacity=".9"/><ellipse cx="312.7" cy="315.6" rx="4.6" ry="1.9" fill="#5f6c2e" opacity=".9"/><ellipse cx="417.3" cy="440.0" rx="5.3" ry="3.1" fill="#161d0d" opacity=".9"/><ellipse cx="301.1" cy="416.3" rx="2.9" ry="2.0" fill="#161d0d" opacity=".9"/><ellipse cx="369.0" cy="326.0" rx="5.2" ry="3.0" fill="#141b0c" opacity=".9"/><ellipse cx="410.1" cy="435.4" rx="4.7" ry="3.3" fill="#11170a" opacity=".9"/><ellipse cx="258.0" cy="322.0" rx="5.7" ry="2.4" fill="#33401f" opacity=".9"/><ellipse cx="316.5" cy="399.8" rx="2.8" ry="2.5" fill="#161d0d" opacity=".9"/><ellipse cx="315.1" cy="466.8" rx="4.8" ry="4.3" fill="#1b2310" opacity=".9"/><ellipse cx="331.8" cy="428.3" rx="2.6" ry="3.8" fill="#2f3a1c" opacity=".9"/><ellipse cx="268.3" cy="409.0" rx="5.3" ry="3.6" fill="#3a4722" opacity=".9"/><ellipse cx="309.1" cy="449.3" rx="4.4" ry="4.1" fill="#141b0c" opacity=".9"/><ellipse cx="305.5" cy="408.6" rx="3.4" ry="3.7" fill="#2f3a1c" opacity=".9"/><ellipse cx="281.3" cy="348.6" rx="3.2" ry="2.0" fill="#161d0d" opacity=".9"/><ellipse cx="396.0" cy="370.2" rx="5.7" ry="2.0" fill="#141b0c" opacity=".9"/><ellipse cx="270.9" cy="377.0" rx="4.0" ry="2.4" fill="#141b0c" opacity=".9"/><ellipse cx="382.1" cy="319.0" rx="2.3" ry="3.7" fill="#85903f" opacity=".9"/><ellipse cx="346.2" cy="402.6" rx="3.9" ry="4.4" fill="#2b361a" opacity=".9"/><ellipse cx="305.2" cy="356.2" rx="3.0" ry="2.3" fill="#85903f" opacity=".9"/><ellipse cx="339.8" cy="413.4" rx="4.4" ry="4.2" fill="#85903f" opacity=".9"/><ellipse cx="415.2" cy="428.2" rx="4.5" ry="4.0" fill="#3a4722" opacity=".9"/><ellipse cx="426.5" cy="320.5" rx="4.2" ry="2.5" fill="#85903f" opacity=".9"/><ellipse cx="292.8" cy="347.0" rx="2.5" ry="1.9" fill="#9aa24e" opacity=".9"/><ellipse cx="390.0" cy="475.5" rx="2.8" ry="4.1" fill="#2f3a1c" opacity=".9"/><ellipse cx="401.8" cy="413.3" rx="4.2" ry="3.6" fill="#2b361a" opacity=".9"/><ellipse cx="414.3" cy="444.2" rx="3.8" ry="3.9" fill="#33401f" opacity=".9"/><ellipse cx="362.5" cy="400.9" rx="3.5" ry="2.4" fill="#3a4722" opacity=".9"/><ellipse cx="360.2" cy="350.4" rx="2.5" ry="3.3" fill="#1b2310" opacity=".9"/><ellipse cx="347.5" cy="472.4" rx="5.6" ry="2.1" fill="#11170a" opacity=".9"/><ellipse cx="345.7" cy="322.3" rx="3.5" ry="2.2" fill="#11170a" opacity=".9"/><ellipse cx="420.1" cy="423.6" rx="4.4" ry="4.5" fill="#9aa24e" opacity=".9"/><ellipse cx="368.9" cy="459.1" rx="3.9" ry="3.6" fill="#161d0d" opacity=".9"/><ellipse cx="252.7" cy="429.2" rx="5.5" ry="2.1" fill="#1b2310" opacity=".9"/><ellipse cx="263.1" cy="335.9" rx="4.3" ry="4.4" fill="#161d0d" opacity=".9"/><ellipse cx="344.9" cy="325.1" rx="3.0" ry="2.5" fill="#5f6c2e" opacity=".9"/><ellipse cx="265.3" cy="400.7" rx="5.5" ry="4.3" fill="#1b2310" opacity=".9"/><ellipse cx="239.9" cy="391.1" rx="5.7" ry="2.0" fill="#11170a" opacity=".9"/><ellipse cx="336.7" cy="478.5" rx="3.3" ry="2.6" fill="#6f7c36" opacity=".9"/><ellipse cx="427.5" cy="377.0" rx="4.8" ry="3.2" fill="#85903f" opacity=".9"/><ellipse cx="348.5" cy="440.9" rx="3.6" ry="4.4" fill="#161d0d" opacity=".9"/><ellipse cx="277.9" cy="373.5" rx="3.5" ry="2.7" fill="#3a4722" opacity=".9"/><ellipse cx="238.9" cy="443.3" rx="4.2" ry="2.7" fill="#3a4722" opacity=".9"/><ellipse cx="366.9" cy="384.6" rx="2.9" ry="2.2" fill="#9aa24e" opacity=".9"/><ellipse cx="285.2" cy="389.1" rx="2.9" ry="3.6" fill="#11170a" opacity=".9"/><ellipse cx="354.4" cy="410.8" rx="2.9" ry="2.4" fill="#161d0d" opacity=".9"/><ellipse cx="294.5" cy="361.3" rx="5.2" ry="3.3" fill="#161d0d" opacity=".9"/><ellipse cx="251.2" cy="442.0" rx="2.4" ry="3.3" fill="#2b361a" opacity=".9"/><ellipse cx="262.8" cy="424.6" rx="6.0" ry="2.8" fill="#33401f" opacity=".9"/><ellipse cx="262.3" cy="446.9" rx="6.0" ry="2.4" fill="#11170a" opacity=".9"/><ellipse cx="411.9" cy="404.6" rx="4.0" ry="4.0" fill="#161d0d" opacity=".9"/><ellipse cx="238.7" cy="392.8" rx="3.8" ry="2.2" fill="#33401f" opacity=".9"/><ellipse cx="249.1" cy="329.7" rx="5.7" ry="2.7" fill="#2b361a" opacity=".9"/><ellipse cx="416.6" cy="326.4" rx="2.9" ry="2.2" fill="#33401f" opacity=".9"/><ellipse cx="367.6" cy="464.2" rx="3.6" ry="3.8" fill="#141b0c" opacity=".9"/><ellipse cx="415.2" cy="327.2" rx="5.0" ry="3.6" fill="#1b2310" opacity=".9"/><ellipse cx="259.9" cy="359.8" rx="4.2" ry="3.3" fill="#11170a" opacity=".9"/><ellipse cx="346.1" cy="441.8" rx="2.5" ry="2.4" fill="#161d0d" opacity=".9"/><ellipse cx="250.9" cy="357.5" rx="2.8" ry="2.7" fill="#1b2310" opacity=".9"/><ellipse cx="346.3" cy="354.8" rx="3.5" ry="4.5" fill="#141b0c" opacity=".9"/><ellipse cx="330.8" cy="307.3" rx="5.9" ry="1.9" fill="#9aa24e" opacity=".9"/><ellipse cx="384.0" cy="374.5" rx="2.4" ry="2.9" fill="#85903f" opacity=".9"/><ellipse cx="395.6" cy="478.8" rx="5.2" ry="3.1" fill="#9aa24e" opacity=".9"/><ellipse cx="362.6" cy="386.5" rx="2.8" ry="4.4" fill="#6f7c36" opacity=".9"/><ellipse cx="301.3" cy="457.7" rx="3.2" ry="3.8" fill="#141b0c" opacity=".9"/><ellipse cx="268.3" cy="326.7" rx="3.8" ry="3.4" fill="#2f3a1c" opacity=".9"/><ellipse cx="285.7" cy="476.6" rx="4.0" ry="3.3" fill="#1b2310" opacity=".9"/><ellipse cx="414.4" cy="442.3" rx="3.1" ry="3.4" fill="#11170a" opacity=".9"/><ellipse cx="266.6" cy="476.2" rx="4.6" ry="1.8" fill="#33401f" opacity=".9"/><ellipse cx="329.0" cy="320.8" rx="4.8" ry="3.6" fill="#141b0c" opacity=".9"/><ellipse cx="313.8" cy="392.6" rx="2.4" ry="2.7" fill="#141b0c" opacity=".9"/><ellipse cx="360.0" cy="311.5" rx="3.3" ry="3.0" fill="#6f7c36" opacity=".9"/><ellipse cx="252.4" cy="448.8" rx="5.2" ry="2.5" fill="#2f3a1c" opacity=".9"/><ellipse cx="411.1" cy="393.7" rx="5.8" ry="3.1" fill="#33401f" opacity=".9"/><ellipse cx="329.5" cy="354.1" rx="5.7" ry="3.5" fill="#11170a" opacity=".9"/><ellipse cx="369.8" cy="383.0" rx="4.8" ry="4.0" fill="#2b361a" opacity=".9"/><ellipse cx="374.1" cy="450.6" rx="2.6" ry="3.1" fill="#1b2310" opacity=".9"/><ellipse cx="374.6" cy="308.2" rx="4.0" ry="3.5" fill="#11170a" opacity=".9"/><ellipse cx="367.0" cy="374.4" rx="5.9" ry="2.2" fill="#161d0d" opacity=".9"/><ellipse cx="286.4" cy="353.6" rx="2.9" ry="3.7" fill="#3a4722" opacity=".9"/><ellipse cx="383.1" cy="483.2" rx="5.0" ry="3.6" fill="#1b2310" opacity=".9"/><ellipse cx="320.6" cy="375.8" rx="4.4" ry="4.3" fill="#33401f" opacity=".9"/><ellipse cx="360.0" cy="391.5" rx="2.3" ry="4.2" fill="#3a4722" opacity=".9"/><ellipse cx="333.0" cy="482.1" rx="4.8" ry="3.2" fill="#33401f" opacity=".9"/><ellipse cx="297.3" cy="350.8" rx="4.8" ry="4.3" fill="#3a4722" opacity=".9"/><ellipse cx="300.1" cy="472.4" rx="4.2" ry="3.4" fill="#11170a" opacity=".9"/><ellipse cx="294.8" cy="386.3" rx="3.3" ry="3.2" fill="#6f7c36" opacity=".9"/><ellipse cx="330.6" cy="306.6" rx="4.0" ry="3.8" fill="#161d0d" opacity=".9"/><ellipse cx="284.5" cy="337.1" rx="3.8" ry="2.9" fill="#1b2310" opacity=".9"/><ellipse cx="301.9" cy="478.3" rx="3.0" ry="4.3" fill="#2f3a1c" opacity=".9"/><ellipse cx="389.2" cy="470.5" rx="3.8" ry="3.7" fill="#2f3a1c" opacity=".9"/><ellipse cx="383.9" cy="403.2" rx="4.4" ry="2.9" fill="#11170a" opacity=".9"/><ellipse cx="238.4" cy="316.2" rx="4.5" ry="2.3" fill="#6f7c36" opacity=".9"/><ellipse cx="424.0" cy="446.4" rx="3.2" ry="4.0" fill="#11170a" opacity=".9"/><ellipse cx="244.0" cy="310.8" rx="5.8" ry="2.3" fill="#6f7c36" opacity=".9"/><ellipse cx="285.0" cy="468.3" rx="3.2" ry="3.7" fill="#161d0d" opacity=".9"/><ellipse cx="320.9" cy="323.8" rx="3.7" ry="3.6" fill="#2b361a" opacity=".9"/><ellipse cx="368.2" cy="414.5" rx="2.7" ry="1.9" fill="#7a8638" opacity=".9"/><ellipse cx="327.9" cy="303.1" rx="5.0" ry="3.5" fill="#9aa24e" opacity=".9"/><ellipse cx="276.3" cy="345.6" rx="5.7" ry="3.5" fill="#11170a" opacity=".9"/><ellipse cx="301.1" cy="304.1" rx="5.0" ry="4.1" fill="#141b0c" opacity=".9"/><ellipse cx="273.2" cy="306.3" rx="3.9" ry="2.8" fill="#5f6c2e" opacity=".9"/><ellipse cx="320.7" cy="384.3" rx="3.8" ry="2.6" fill="#33401f" opacity=".9"/><ellipse cx="385.9" cy="384.7" rx="4.7" ry="3.6" fill="#2f3a1c" opacity=".9"/><ellipse cx="333.9" cy="448.9" rx="5.0" ry="2.6" fill="#161d0d" opacity=".9"/><ellipse cx="376.5" cy="476.7" rx="3.9" ry="3.6" fill="#141b0c" opacity=".9"/><ellipse cx="279.8" cy="443.3" rx="4.3" ry="2.9" fill="#11170a" opacity=".9"/><ellipse cx="398.9" cy="364.1" rx="4.5" ry="2.4" fill="#33401f" opacity=".9"/><ellipse cx="313.3" cy="484.8" rx="2.4" ry="3.4" fill="#2f3a1c" opacity=".9"/><ellipse cx="395.3" cy="455.7" rx="5.0" ry="3.4" fill="#3a4722" opacity=".9"/><ellipse cx="284.8" cy="431.2" rx="6.0" ry="2.2" fill="#1b2310" opacity=".9"/><ellipse cx="387.4" cy="360.4" rx="3.2" ry="3.3" fill="#161d0d" opacity=".9"/><ellipse cx="338.5" cy="392.1" rx="4.7" ry="2.6" fill="#9aa24e" opacity=".9"/><ellipse cx="392.4" cy="378.1" rx="2.4" ry="3.0" fill="#7a8638" opacity=".9"/><ellipse cx="344.1" cy="381.8" rx="3.5" ry="3.8" fill="#5f6c2e" opacity=".9"/><ellipse cx="250.6" cy="355.9" rx="5.3" ry="2.8" fill="#11170a" opacity=".9"/><ellipse cx="289.1" cy="366.7" rx="4.3" ry="2.9" fill="#161d0d" opacity=".9"/><ellipse cx="314.5" cy="446.6" rx="3.0" ry="1.9" fill="#1b2310" opacity=".9"/><ellipse cx="412.6" cy="418.5" rx="3.2" ry="3.1" fill="#85903f" opacity=".9"/><ellipse cx="370.9" cy="305.2" rx="3.0" ry="3.7" fill="#11170a" opacity=".9"/><ellipse cx="371.7" cy="362.7" rx="5.4" ry="3.7" fill="#1b2310" opacity=".9"/><ellipse cx="241.4" cy="470.6" rx="4.5" ry="4.5" fill="#11170a" opacity=".9"/><ellipse cx="279.3" cy="341.4" rx="4.7" ry="4.3" fill="#1b2310" opacity=".9"/><ellipse cx="388.9" cy="464.9" rx="5.7" ry="3.6" fill="#2b361a" opacity=".9"/><ellipse cx="269.3" cy="366.1" rx="5.1" ry="2.7" fill="#1b2310" opacity=".9"/><ellipse cx="401.7" cy="389.1" rx="4.9" ry="1.9" fill="#9aa24e" opacity=".9"/><ellipse cx="371.0" cy="311.7" rx="2.6" ry="1.9" fill="#161d0d" opacity=".9"/><ellipse cx="304.5" cy="483.2" rx="2.4" ry="2.1" fill="#141b0c" opacity=".9"/><ellipse cx="240.1" cy="429.6" rx="2.4" ry="2.2" fill="#3a4722" opacity=".9"/><ellipse cx="367.7" cy="310.0" rx="4.3" ry="2.8" fill="#1b2310" opacity=".9"/><ellipse cx="305.8" cy="346.3" rx="2.3" ry="2.8" fill="#5f6c2e" opacity=".9"/><ellipse cx="316.8" cy="332.1" rx="5.4" ry="3.1" fill="#85903f" opacity=".9"/><ellipse cx="335.3" cy="358.0" rx="4.8" ry="3.2" fill="#141b0c" opacity=".9"/><ellipse cx="316.2" cy="372.5" rx="3.9" ry="3.4" fill="#2f3a1c" opacity=".9"/><ellipse cx="429.5" cy="449.4" rx="2.3" ry="2.6" fill="#11170a" opacity=".9"/><ellipse cx="242.2" cy="448.1" rx="4.2" ry="2.8" fill="#11170a" opacity=".9"/><ellipse cx="415.0" cy="403.6" rx="5.0" ry="3.0" fill="#3a4722" opacity=".9"/><ellipse cx="313.1" cy="402.8" rx="2.5" ry="2.5" fill="#1b2310" opacity=".9"/><ellipse cx="424.4" cy="401.1" rx="2.3" ry="2.6" fill="#3a4722" opacity=".9"/><ellipse cx="305.2" cy="477.7" rx="2.3" ry="2.2" fill="#161d0d" opacity=".9"/><ellipse cx="311.6" cy="418.9" rx="6.0" ry="4.2" fill="#7a8638" opacity=".9"/><ellipse cx="350.8" cy="401.7" rx="2.5" ry="3.8" fill="#85903f" opacity=".9"/><ellipse cx="283.0" cy="392.9" rx="6.0" ry="4.3" fill="#11170a" opacity=".9"/><ellipse cx="355.2" cy="302.3" rx="4.5" ry="2.5" fill="#2b361a" opacity=".9"/><ellipse cx="296.4" cy="333.0" rx="5.9" ry="2.3" fill="#161d0d" opacity=".9"/><ellipse cx="272.5" cy="448.2" rx="2.4" ry="1.9" fill="#2b361a" opacity=".9"/><ellipse cx="390.8" cy="326.1" rx="5.0" ry="4.2" fill="#6f7c36" opacity=".9"/><ellipse cx="361.1" cy="483.1" rx="3.4" ry="2.1" fill="#1b2310" opacity=".9"/><ellipse cx="237.3" cy="427.2" rx="3.7" ry="4.0" fill="#11170a" opacity=".9"/><ellipse cx="284.9" cy="433.0" rx="4.7" ry="1.9" fill="#2f3a1c" opacity=".9"/><ellipse cx="350.6" cy="350.3" rx="2.5" ry="2.3" fill="#6f7c36" opacity=".9"/><ellipse cx="282.0" cy="353.9" rx="5.9" ry="3.6" fill="#161d0d" opacity=".9"/><ellipse cx="357.8" cy="371.3" rx="2.2" ry="2.9" fill="#141b0c" opacity=".9"/><ellipse cx="350.1" cy="322.7" rx="2.3" ry="4.5" fill="#6f7c36" opacity=".9"/><ellipse cx="308.0" cy="361.4" rx="4.6" ry="3.4" fill="#7a8638" opacity=".9"/><ellipse cx="275.6" cy="302.1" rx="3.9" ry="3.1" fill="#1b2310" opacity=".9"/><ellipse cx="244.3" cy="400.9" rx="2.9" ry="3.1" fill="#1b2310" opacity=".9"/><ellipse cx="399.7" cy="415.3" rx="4.9" ry="1.9" fill="#11170a" opacity=".9"/><ellipse cx="396.1" cy="327.5" rx="5.6" ry="2.5" fill="#6f7c36" opacity=".9"/><ellipse cx="361.6" cy="327.0" rx="5.4" ry="3.4" fill="#2b361a" opacity=".9"/><ellipse cx="413.8" cy="307.0" rx="2.9" ry="3.0" fill="#5f6c2e" opacity=".9"/><ellipse cx="320.8" cy="313.7" rx="2.8" ry="3.2" fill="#33401f" opacity=".9"/><ellipse cx="308.8" cy="327.8" rx="3.7" ry="3.1" fill="#33401f" opacity=".9"/><ellipse cx="243.7" cy="414.4" rx="5.8" ry="2.9" fill="#3a4722" opacity=".9"/><ellipse cx="389.0" cy="458.4" rx="5.8" ry="2.2" fill="#3a4722" opacity=".9"/><ellipse cx="310.4" cy="431.7" rx="5.7" ry="1.9" fill="#33401f" opacity=".9"/><ellipse cx="291.2" cy="354.5" rx="4.9" ry="4.3" fill="#161d0d" opacity=".9"/><ellipse cx="272.0" cy="373.2" rx="2.6" ry="4.4" fill="#11170a" opacity=".9"/><ellipse cx="379.7" cy="461.1" rx="6.0" ry="4.1" fill="#3a4722" opacity=".9"/><ellipse cx="363.2" cy="478.6" rx="4.1" ry="2.0" fill="#2f3a1c" opacity=".9"/><ellipse cx="386.7" cy="421.9" rx="3.0" ry="4.4" fill="#3a4722" opacity=".9"/><ellipse cx="311.5" cy="349.8" rx="3.2" ry="2.8" fill="#33401f" opacity=".9"/><ellipse cx="370.6" cy="335.3" rx="3.6" ry="3.4" fill="#1b2310" opacity=".9"/><ellipse cx="378.3" cy="321.4" rx="4.6" ry="3.1" fill="#3a4722" opacity=".9"/><ellipse cx="334.4" cy="305.0" rx="5.2" ry="2.3" fill="#2b361a" opacity=".9"/><ellipse cx="325.8" cy="388.2" rx="3.4" ry="2.9" fill="#11170a" opacity=".9"/><ellipse cx="296.7" cy="437.9" rx="5.7" ry="3.6" fill="#1b2310" opacity=".9"/><ellipse cx="421.9" cy="323.4" rx="3.8" ry="4.1" fill="#33401f" opacity=".9"/><ellipse cx="341.8" cy="336.2" rx="5.9" ry="2.0" fill="#3a4722" opacity=".9"/><ellipse cx="255.1" cy="306.7" rx="4.8" ry="3.3" fill="#3a4722" opacity=".9"/><ellipse cx="402.1" cy="369.2" rx="4.0" ry="2.1" fill="#6f7c36" opacity=".9"/><ellipse cx="349.7" cy="458.6" rx="2.7" ry="3.4" fill="#3a4722" opacity=".9"/><ellipse cx="395.9" cy="364.1" rx="5.6" ry="3.3" fill="#5f6c2e" opacity=".9"/><ellipse cx="348.9" cy="460.5" rx="3.3" ry="3.9" fill="#11170a" opacity=".9"/><ellipse cx="358.8" cy="387.1" rx="5.4" ry="3.1" fill="#9aa24e" opacity=".9"/><ellipse cx="412.5" cy="329.2" rx="2.7" ry="3.4" fill="#7a8638" opacity=".9"/><ellipse cx="368.3" cy="484.2" rx="2.5" ry="3.4" fill="#11170a" opacity=".9"/><ellipse cx="317.5" cy="352.0" rx="5.7" ry="3.6" fill="#141b0c" opacity=".9"/><ellipse cx="401.8" cy="315.0" rx="4.2" ry="4.4" fill="#9aa24e" opacity=".9"/><ellipse cx="420.9" cy="382.6" rx="4.5" ry="3.9" fill="#33401f" opacity=".9"/><ellipse cx="322.2" cy="354.9" rx="5.0" ry="1.8" fill="#2b361a" opacity=".9"/><ellipse cx="268.7" cy="326.5" rx="5.6" ry="3.8" fill="#6f7c36" opacity=".9"/><ellipse cx="248.5" cy="425.6" rx="2.9" ry="4.4" fill="#2f3a1c" opacity=".9"/><ellipse cx="290.6" cy="309.0" rx="5.2" ry="2.1" fill="#141b0c" opacity=".9"/><ellipse cx="243.2" cy="421.3" rx="5.3" ry="4.3" fill="#1b2310" opacity=".9"/><ellipse cx="270.6" cy="392.0" rx="3.0" ry="3.5" fill="#2f3a1c" opacity=".9"/><ellipse cx="250.3" cy="471.8" rx="3.4" ry="3.8" fill="#1b2310" opacity=".9"/><ellipse cx="411.3" cy="447.9" rx="3.1" ry="4.1" fill="#7a8638" opacity=".9"/><ellipse cx="335.9" cy="401.7" rx="4.3" ry="2.7" fill="#2b361a" opacity=".9"/><ellipse cx="268.7" cy="438.3" rx="4.8" ry="4.1" fill="#11170a" opacity=".9"/><ellipse cx="417.8" cy="341.6" rx="2.6" ry="2.3" fill="#7a8638" opacity=".9"/><ellipse cx="396.3" cy="392.3" rx="3.0" ry="2.0" fill="#11170a" opacity=".9"/><ellipse cx="279.7" cy="412.8" rx="4.9" ry="3.4" fill="#33401f" opacity=".9"/><ellipse cx="355.0" cy="443.2" rx="3.7" ry="3.6" fill="#141b0c" opacity=".9"/><ellipse cx="308.6" cy="376.4" rx="3.5" ry="2.8" fill="#3a4722" opacity=".9"/><ellipse cx="400.3" cy="448.8" rx="3.7" ry="3.5" fill="#11170a" opacity=".9"/><ellipse cx="284.7" cy="358.7" rx="5.7" ry="2.6" fill="#85903f" opacity=".9"/><ellipse cx="309.4" cy="321.8" rx="5.6" ry="2.0" fill="#7a8638" opacity=".9"/><ellipse cx="285.4" cy="441.2" rx="3.5" ry="3.1" fill="#33401f" opacity=".9"/><ellipse cx="275.1" cy="354.1" rx="3.4" ry="3.1" fill="#3a4722" opacity=".9"/><ellipse cx="276.6" cy="406.0" rx="2.9" ry="2.1" fill="#141b0c" opacity=".9"/><ellipse cx="251.0" cy="447.3" rx="3.1" ry="3.1" fill="#161d0d" opacity=".9"/><ellipse cx="330.6" cy="359.3" rx="3.5" ry="4.4" fill="#2f3a1c" opacity=".9"/><ellipse cx="305.8" cy="471.6" rx="2.7" ry="4.0" fill="#161d0d" opacity=".9"/><ellipse cx="253.5" cy="403.6" rx="2.9" ry="3.5" fill="#33401f" opacity=".9"/><ellipse cx="294.0" cy="359.0" rx="5.8" ry="3.8" fill="#3a4722" opacity=".9"/><ellipse cx="361.3" cy="388.0" rx="2.8" ry="3.2" fill="#161d0d" opacity=".9"/><ellipse cx="316.2" cy="395.9" rx="2.6" ry="2.2" fill="#141b0c" opacity=".9"/><ellipse cx="245.2" cy="329.8" rx="2.6" ry="2.2" fill="#11170a" opacity=".9"/><ellipse cx="268.8" cy="406.8" rx="2.6" ry="2.7" fill="#11170a" opacity=".9"/><ellipse cx="317.2" cy="391.6" rx="2.5" ry="2.5" fill="#2b361a" opacity=".9"/><ellipse cx="385.1" cy="409.9" rx="3.4" ry="3.6" fill="#141b0c" opacity=".9"/><ellipse cx="319.0" cy="307.7" rx="2.6" ry="2.2" fill="#9aa24e" opacity=".9"/><ellipse cx="274.3" cy="399.1" rx="5.9" ry="2.4" fill="#161d0d" opacity=".9"/><ellipse cx="362.3" cy="416.6" rx="2.9" ry="3.8" fill="#2f3a1c" opacity=".9"/><ellipse cx="394.7" cy="474.3" rx="3.6" ry="3.0" fill="#33401f" opacity=".9"/><ellipse cx="412.7" cy="316.9" rx="5.7" ry="2.0" fill="#85903f" opacity=".9"/><ellipse cx="291.2" cy="457.5" rx="3.9" ry="3.0" fill="#11170a" opacity=".9"/><ellipse cx="326.8" cy="368.9" rx="5.9" ry="3.7" fill="#3a4722" opacity=".9"/><ellipse cx="265.9" cy="397.8" rx="4.3" ry="4.2" fill="#161d0d" opacity=".9"/><ellipse cx="365.7" cy="341.7" rx="3.4" ry="2.8" fill="#33401f" opacity=".9"/><ellipse cx="296.4" cy="325.5" rx="3.5" ry="2.3" fill="#2f3a1c" opacity=".9"/><ellipse cx="302.2" cy="382.6" rx="5.0" ry="3.9" fill="#1b2310" opacity=".9"/><ellipse cx="252.2" cy="335.1" rx="5.0" ry="2.6" fill="#33401f" opacity=".9"/><ellipse cx="323.7" cy="366.0" rx="5.7" ry="2.0" fill="#3a4722" opacity=".9"/><ellipse cx="293.8" cy="363.8" rx="2.9" ry="4.5" fill="#161d0d" opacity=".9"/><ellipse cx="274.9" cy="449.7" rx="5.6" ry="2.0" fill="#3a4722" opacity=".9"/><ellipse cx="349.9" cy="359.3" rx="5.5" ry="3.2" fill="#9aa24e" opacity=".9"/><ellipse cx="245.8" cy="353.1" rx="3.7" ry="2.0" fill="#2f3a1c" opacity=".9"/><ellipse cx="402.1" cy="377.3" rx="5.0" ry="2.7" fill="#2f3a1c" opacity=".9"/><ellipse cx="280.1" cy="311.7" rx="3.2" ry="2.6" fill="#9aa24e" opacity=".9"/><ellipse cx="415.5" cy="400.2" rx="4.8" ry="2.7" fill="#2f3a1c" opacity=".9"/><ellipse cx="331.3" cy="370.3" rx="2.2" ry="3.8" fill="#33401f" opacity=".9"/><ellipse cx="266.5" cy="344.2" rx="5.0" ry="1.9" fill="#161d0d" opacity=".9"/><ellipse cx="237.5" cy="399.7" rx="2.6" ry="3.9" fill="#2f3a1c" opacity=".9"/><ellipse cx="344.0" cy="391.7" rx="4.1" ry="3.9" fill="#3a4722" opacity=".9"/><ellipse cx="398.1" cy="466.3" rx="4.0" ry="3.2" fill="#11170a" opacity=".9"/><ellipse cx="348.3" cy="397.7" rx="5.4" ry="4.0" fill="#161d0d" opacity=".9"/><ellipse cx="340.2" cy="403.9" rx="2.7" ry="1.8" fill="#141b0c" opacity=".9"/><ellipse cx="348.7" cy="466.9" rx="2.6" ry="3.5" fill="#2f3a1c" opacity=".9"/><ellipse cx="395.0" cy="380.2" rx="5.5" ry="3.9" fill="#2f3a1c" opacity=".9"/><ellipse cx="289.4" cy="315.1" rx="4.4" ry="3.7" fill="#161d0d" opacity=".9"/><ellipse cx="250.9" cy="382.2" rx="2.6" ry="4.2" fill="#2b361a" opacity=".9"/><ellipse cx="417.3" cy="323.1" rx="4.3" ry="3.2" fill="#3a4722" opacity=".9"/><ellipse cx="271.3" cy="371.5" rx="2.7" ry="2.6" fill="#141b0c" opacity=".9"/><ellipse cx="239.7" cy="436.8" rx="4.9" ry="2.3" fill="#1b2310" opacity=".9"/><ellipse cx="413.2" cy="389.7" rx="3.4" ry="1.9" fill="#11170a" opacity=".9"/><ellipse cx="253.6" cy="339.0" rx="4.7" ry="2.1" fill="#161d0d" opacity=".9"/><ellipse cx="259.0" cy="315.1" rx="3.9" ry="2.6" fill="#161d0d" opacity=".9"/><ellipse cx="411.8" cy="408.0" rx="5.1" ry="3.2" fill="#5f6c2e" opacity=".9"/><ellipse cx="288.6" cy="397.7" rx="5.0" ry="2.2" fill="#11170a" opacity=".9"/><ellipse cx="285.9" cy="476.9" rx="5.8" ry="4.3" fill="#33401f" opacity=".9"/><ellipse cx="399.2" cy="457.8" rx="5.6" ry="4.3" fill="#161d0d" opacity=".9"/><ellipse cx="380.3" cy="311.0" rx="2.4" ry="3.4" fill="#2f3a1c" opacity=".9"/><ellipse cx="369.3" cy="459.0" rx="4.8" ry="2.8" fill="#3a4722" opacity=".9"/><ellipse cx="360.1" cy="312.6" rx="4.0" ry="2.4" fill="#141b0c" opacity=".9"/><ellipse cx="323.5" cy="426.6" rx="2.8" ry="4.5" fill="#161d0d" opacity=".9"/><ellipse cx="414.3" cy="455.4" rx="5.3" ry="3.4" fill="#2f3a1c" opacity=".9"/><ellipse cx="262.0" cy="449.7" rx="5.0" ry="3.5" fill="#1b2310" opacity=".9"/><ellipse cx="304.7" cy="363.1" rx="5.4" ry="3.3" fill="#6f7c36" opacity=".9"/><ellipse cx="246.2" cy="386.8" rx="5.8" ry="4.0" fill="#161d0d" opacity=".9"/><ellipse cx="428.1" cy="385.5" rx="4.5" ry="2.3" fill="#7a8638" opacity=".9"/><ellipse cx="398.4" cy="368.1" rx="4.6" ry="4.5" fill="#5f6c2e" opacity=".9"/><ellipse cx="351.1" cy="458.6" rx="4.0" ry="4.2" fill="#1b2310" opacity=".9"/><ellipse cx="313.0" cy="302.1" rx="2.4" ry="3.3" fill="#5f6c2e" opacity=".9"/><ellipse cx="297.4" cy="312.0" rx="5.0" ry="3.8" fill="#11170a" opacity=".9"/><ellipse cx="253.8" cy="394.8" rx="3.5" ry="4.4" fill="#33401f" opacity=".9"/><ellipse cx="274.0" cy="398.7" rx="4.2" ry="2.9" fill="#33401f" opacity=".9"/><ellipse cx="369.5" cy="363.0" rx="4.9" ry="2.8" fill="#11170a" opacity=".9"/><ellipse cx="315.2" cy="466.2" rx="5.5" ry="3.8" fill="#1b2310" opacity=".9"/><ellipse cx="246.7" cy="324.3" rx="5.3" ry="2.1" fill="#1b2310" opacity=".9"/><ellipse cx="321.0" cy="386.2" rx="4.1" ry="2.5" fill="#3a4722" opacity=".9"/><ellipse cx="426.3" cy="371.6" rx="3.2" ry="2.4" fill="#6f7c36" opacity=".9"/><ellipse cx="294.7" cy="412.9" rx="5.6" ry="4.3" fill="#2b361a" opacity=".9"/><ellipse cx="285.1" cy="453.3" rx="4.0" ry="3.2" fill="#33401f" opacity=".9"/><ellipse cx="369.6" cy="341.6" rx="5.3" ry="2.2" fill="#161d0d" opacity=".9"/><ellipse cx="400.0" cy="443.1" rx="4.1" ry="3.0" fill="#141b0c" opacity=".9"/><ellipse cx="288.1" cy="420.8" rx="4.8" ry="2.1" fill="#9aa24e" opacity=".9"/><ellipse cx="375.9" cy="430.5" rx="3.8" ry="3.2" fill="#2b361a" opacity=".9"/><ellipse cx="289.5" cy="353.4" rx="2.5" ry="2.9" fill="#11170a" opacity=".9"/><ellipse cx="275.7" cy="470.9" rx="5.1" ry="4.5" fill="#33401f" opacity=".9"/><ellipse cx="350.3" cy="311.6" rx="4.9" ry="2.7" fill="#6f7c36" opacity=".9"/><ellipse cx="311.6" cy="485.3" rx="3.0" ry="2.2" fill="#33401f" opacity=".9"/><ellipse cx="241.5" cy="391.8" rx="4.3" ry="4.2" fill="#3a4722" opacity=".9"/><ellipse cx="295.5" cy="335.1" rx="2.3" ry="3.4" fill="#2f3a1c" opacity=".9"/><ellipse cx="405.6" cy="309.4" rx="3.4" ry="4.1" fill="#2b361a" opacity=".9"/><ellipse cx="392.6" cy="337.7" rx="5.9" ry="4.3" fill="#7a8638" opacity=".9"/><ellipse cx="415.1" cy="400.6" rx="5.4" ry="2.4" fill="#5f6c2e" opacity=".9"/><ellipse cx="269.1" cy="427.0" rx="5.5" ry="4.1" fill="#5f6c2e" opacity=".9"/><ellipse cx="245.0" cy="476.3" rx="2.6" ry="3.2" fill="#2b361a" opacity=".9"/><ellipse cx="246.9" cy="382.1" rx="3.9" ry="2.1" fill="#11170a" opacity=".9"/><ellipse cx="347.8" cy="453.2" rx="4.2" ry="3.7" fill="#2f3a1c" opacity=".9"/><ellipse cx="410.9" cy="421.1" rx="0.9" ry="0.7" fill="#e4ead8" opacity=".85"/><ellipse cx="329.3" cy="355.0" rx="1.1" ry="0.7" fill="#e4ead8" opacity=".85"/><ellipse cx="366.4" cy="376.7" rx="0.7" ry="0.7" fill="#e4ead8" opacity=".85"/><ellipse cx="408.7" cy="445.9" rx="1.3" ry="0.8" fill="#e4ead8" opacity=".85"/><ellipse cx="417.3" cy="337.2" rx="1.2" ry="1.2" fill="#e4ead8" opacity=".85"/><ellipse cx="281.5" cy="310.7" rx="0.8" ry="0.7" fill="#e4ead8" opacity=".85"/><ellipse cx="385.6" cy="407.0" rx="1.0" ry="0.7" fill="#e4ead8" opacity=".85"/><ellipse cx="357.4" cy="331.9" rx="0.8" ry="1.0" fill="#e4ead8" opacity=".85"/><ellipse cx="357.6" cy="438.1" rx="1.3" ry="0.7" fill="#e4ead8" opacity=".85"/><ellipse cx="298.2" cy="333.0" rx="1.0" ry="0.6" fill="#e4ead8" opacity=".85"/><ellipse cx="396.8" cy="419.1" rx="1.3" ry="0.9" fill="#e4ead8" opacity=".85"/><ellipse cx="404.6" cy="443.6" rx="1.3" ry="1.1" fill="#e4ead8" opacity=".85"/><ellipse cx="282.8" cy="365.3" rx="0.7" ry="1.1" fill="#e4ead8" opacity=".85"/><ellipse cx="327.8" cy="467.8" rx="0.9" ry="0.9" fill="#e4ead8" opacity=".85"/><ellipse cx="396.6" cy="465.0" rx="1.2" ry="1.1" fill="#e4ead8" opacity=".85"/><ellipse cx="406.6" cy="353.5" rx="1.1" ry="0.6" fill="#e4ead8" opacity=".85"/><ellipse cx="363.4" cy="462.4" rx="1.1" ry="0.7" fill="#e4ead8" opacity=".85"/><ellipse cx="344.6" cy="320.5" rx="1.0" ry="0.6" fill="#e4ead8" opacity=".85"/><ellipse cx="318.0" cy="440.9" rx="1.2" ry="1.1" fill="#e4ead8" opacity=".85"/><ellipse cx="325.0" cy="380.6" rx="0.7" ry="1.1" fill="#e4ead8" opacity=".85"/><ellipse cx="344.7" cy="375.3" rx="0.8" ry="0.9" fill="#e4ead8" opacity=".85"/><ellipse cx="256.0" cy="329.2" rx="0.8" ry="0.9" fill="#e4ead8" opacity=".85"/><ellipse cx="269.0" cy="442.4" rx="1.1" ry="1.1" fill="#e4ead8" opacity=".85"/><ellipse cx="341.9" cy="335.5" rx="0.9" ry="1.1" fill="#e4ead8" opacity=".85"/><ellipse cx="347.4" cy="413.4" rx="1.1" ry="0.6" fill="#e4ead8" opacity=".85"/><ellipse cx="280.0" cy="379.0" rx="1.3" ry="1.2" fill="#e4ead8" opacity=".85"/><ellipse cx="348.4" cy="351.5" rx="0.7" ry="0.9" fill="#e4ead8" opacity=".85"/><ellipse cx="316.6" cy="458.9" rx="0.8" ry="0.7" fill="#e4ead8" opacity=".85"/><ellipse cx="247.8" cy="314.6" rx="1.3" ry="1.1" fill="#e4ead8" opacity=".85"/><ellipse cx="271.9" cy="312.5" rx="1.1" ry="0.7" fill="#e4ead8" opacity=".85"/><ellipse cx="352.5" cy="455.9" rx="1.2" ry="0.8" fill="#e4ead8" opacity=".85"/><ellipse cx="351.2" cy="356.3" rx="1.2" ry="0.8" fill="#e4ead8" opacity=".85"/><ellipse cx="397.1" cy="418.5" rx="1.3" ry="0.8" fill="#e4ead8" opacity=".85"/><ellipse cx="412.0" cy="403.2" rx="0.9" ry="1.0" fill="#e4ead8" opacity=".85"/><ellipse cx="299.3" cy="328.1" rx="0.7" ry="1.0" fill="#e4ead8" opacity=".85"/><ellipse cx="287.3" cy="326.0" rx="1.2" ry="0.7" fill="#e4ead8" opacity=".85"/><ellipse cx="377.1" cy="353.7" rx="1.0" ry="1.2" fill="#e4ead8" opacity=".85"/><ellipse cx="390.0" cy="443.5" rx="1.4" ry="1.0" fill="#e4ead8" opacity=".85"/><ellipse cx="408.7" cy="409.6" rx="1.1" ry="0.8" fill="#e4ead8" opacity=".85"/><ellipse cx="311.4" cy="401.2" rx="0.9" ry="1.0" fill="#e4ead8" opacity=".85"/></g></g><rect x="236" y="298" width="196" height="192" clip-path="url(#canclip)" filter="url(#speck)"/></g><g filter="url(#leaf2)"><ellipse cx="293.0" cy="450.0" rx="8.0" ry="4.0" fill="#b0502e" /><ellipse cx="259.0" cy="459.0" rx="10.0" ry="4.5" fill="#a04a30" /><ellipse cx="246.0" cy="466.0" rx="6.0" ry="3.0" fill="#8e4a34" /></g><polygon points="246.0,516.5 259.0,514.5 301.0,527.0 301.0,536.0 288.0,536.5 246.0,523.0" fill="#e9e6e2" /><polygon points="246.0,523.0 288.0,536.5 301.0,536.0 301.0,532.0 288.0,532.0 246.0,519.5" fill="#cfcac4" /><polygon points="239.0,538.0 274.0,548.0 352.0,575.5 352.0,590.0 326.0,591.5 239.0,556.0" fill="#e4e1dd" /><polygon points="239.0,538.0 274.0,548.0 352.0,575.5 326.0,579.0 239.0,545.0" fill="#efede9" /><polygon points="326.0,579.0 352.0,575.5 352.0,590.0 326.0,591.5" fill="#cbc6c0" /><ellipse cx="255" cy="548" rx="18" ry="7" fill="#8d8a84" opacity=".6" filter="url(#blur2)"/><rect x="505" y="503" width="14" height="9" fill="none" stroke="#3a2a20" stroke-width="1.500"/><rect x="524" y="504" width="16" height="9" fill="none" stroke="#3a2a20" stroke-width="1.500"/><rect x="372" y="524" width="25" height="20" fill="none" stroke="#6f4520" stroke-width="2.400"/><rect x="377" y="530" width="13" height="12" fill="none" stroke="#8a5a28" stroke-width="2"/><ellipse cx="388.0" cy="547.0" rx="14.0" ry="2.5" fill="#5b3316" opacity="0.40" filter="url(#blur1)"/><rect x="324.0" y="524.0" width="14.0" height="14.0" fill="#25201d" /><ellipse cx="335.0" cy="541.0" rx="14.0" ry="3.0" fill="#5b3316" opacity="0.50" filter="url(#blur1)"/><rect x="601.0" y="488.0" width="6.0" height="4.0" fill="#3a2a20" /><rect x="609.0" y="497.0" width="17.0" height="7.0" fill="#4a3a32" opacity=".8"/><rect x="630.0" y="499.0" width="22.0" height="7.0" fill="#5a463a" opacity=".7"/><ellipse cx="484.0" cy="498.0" rx="1.1" ry="1.2" fill="#3a2a22" /><rect x="482.0" y="499.1" width="3.9" height="5.6" fill="#8f8f9a" rx="1.2"/><rect x="482.4" y="504.0" width="3.3" height="7.0" fill="#4a3a3a" rx="0.8"/><ellipse cx="492.0" cy="495.1" rx="1.2" ry="1.4" fill="#3a2a22" /><rect x="489.8" y="496.4" width="4.5" height="6.4" fill="#5a4a44" rx="1.3"/><rect x="490.1" y="502.0" width="3.8" height="8.0" fill="#3a2f2a" rx="0.9"/><ellipse cx="538.0" cy="492.0" rx="1.1" ry="1.2" fill="#3a2a22" /><rect x="536.0" y="493.1" width="3.9" height="5.6" fill="#2a2420" rx="1.2"/><rect x="536.4" y="498.0" width="3.3" height="7.0" fill="#2a2420" rx="0.8"/><ellipse cx="568.0" cy="496.0" rx="1.1" ry="1.2" fill="#3a2a22" /><rect x="566.0" y="497.1" width="3.9" height="5.6" fill="#e8e0d8" rx="1.2"/><rect x="566.4" y="502.0" width="3.3" height="7.0" fill="#7a2a2a" rx="0.8"/><ellipse cx="574.0" cy="496.0" rx="1.1" ry="1.2" fill="#3a2a22" /><rect x="572.0" y="497.1" width="3.9" height="5.6" fill="#d05a30" rx="1.2"/><rect x="572.4" y="502.0" width="3.3" height="7.0" fill="#e8e0d8" rx="0.8"/><ellipse cx="570.0" cy="510.0" rx="10.0" ry="2.0" fill="#5b3316" opacity="0.50" filter="url(#blur1)"/><ellipse cx="597.0" cy="489.1" rx="1.2" ry="1.4" fill="3.5" /><rect x="594.8" y="490.4" width="4.5" height="6.4" fill="#2a2420" rx="1.3"/><rect x="595.1" y="496.0" width="3.8" height="8.0" fill="#2a2420" rx="0.9"/><ellipse cx="593.0" cy="505.0" rx="6.0" ry="1.5" fill="#5b3316" opacity="0.50" filter="url(#blur1)"/><ellipse cx="358.0" cy="505.8" rx="1.9" ry="2.2" fill="#3a2a22" /><rect x="354.4" y="507.9" width="7.3" height="10.4" fill="#6d6258" rx="2.2"/><rect x="354.9" y="517.0" width="6.1" height="13.0" fill="#3a3532" rx="1.5"/><ellipse cx="366.0" cy="504.0" rx="2.1" ry="2.4" fill="#3a2a22" /><rect x="362.1" y="506.2" width="7.8" height="11.2" fill="#b3a596" rx="2.4"/><rect x="362.7" y="516.0" width="6.6" height="14.0" fill="#8a7a6c" rx="1.6"/><ellipse cx="366.0" cy="503.0" rx="4.0" ry="2.5" fill="#e8e4de" /><path d="M332,601 L358,596 L366,600 L345,612 L330,612 Z" fill="#5b3316" opacity=".55" filter="url(#blur1)"/><ellipse cx="357.0" cy="527.5" rx="4.2" ry="5.0" fill="#3a2a20" /><path d="M353,536 Q362,531 372,536 L376,556 L371,557 L370,566 L353,566 L353,552 L349,556 L346,553 Z" fill="#ebe8e2" /><path d="M354,545 L370,545 M354,550 L370,550 M354,555 L370,555" fill="none" stroke="#bdb6ac" stroke-width="1"/><path d="M354.500,563 L371,563 L369,597 L362.500,597 L363,578 L360.500,597 L356,597 Z" fill="#8c5e62" /><path d="M356,570 L369,572 M356,578 L368,580 M357,586 L367,588" fill="none" stroke="#b08a88" stroke-width="1.200"/><path d="M346,553 L340,562 L342,563 L349,556 Z" fill="#4a3424" /><path d="M374,556 L378,566 L376,567 L372,558 Z" fill="#4a3424" /><rect x="355.0" y="595.0" width="14.0" height="5.5" fill="#22222c" rx="2"/><ellipse cx="438.0" cy="567.0" rx="28.0" ry="5.0" fill="#5b3316" opacity="0.60" filter="url(#blur1)"/><ellipse cx="436.0" cy="510.0" rx="5.0" ry="5.0" fill="#c9a88a" /><ellipse cx="437.0" cy="508.0" rx="5.0" ry="3.0" fill="#e4d2b8" /><path d="M431,516 L443,516 L447,545 L428,548 Z" fill="#c5482c" /><path d="M433,522 L441,520 L444,534 L432,538 Z" fill="#e0b04a" opacity=".7"/><rect x="431.0" y="546.0" width="4.0" height="14.0" fill="#5a3a2a" /><rect x="440.0" y="546.0" width="3.0" height="10.0" fill="#5a3a2a" /><rect x="434.0" y="540.0" width="9.0" height="12.0" fill="#2f6fb8" rx="2"/><ellipse cx="450.0" cy="510.0" rx="6.0" ry="6.0" fill="#1f1814" /><path d="M445,517 L456,517 L458,535 L445,535 Z" fill="#c86a4a" /><path d="M446,534 L458,534 L472,556 L468,558 L452,542 L446,564 L441,563 Z" fill="#f1eeea" /><rect x="438.0" y="562.0" width="9.0" height="3.0" fill="#2a2420" /><rect x="466.0" y="555.0" width="8.0" height="3.5" fill="#2a2420" /><ellipse cx="464.0" cy="514.0" rx="5.0" ry="6.0" fill="#1f1814" /><path d="M459,520 L470,520 L472,540 L459,540 Z" fill="#2a2626" /><path d="M460,522 L466,522 L466,532 L460,532 Z" fill="#e8e4e0" /><path d="M460,539 L471,539 L477,556 L473,557 L466,545 L463,562 L458,562 Z" fill="#25262e" /><rect x="456.0" y="560.0" width="9.0" height="3.0" fill="#1a1614" /><ellipse cx="385.0" cy="628.0" rx="40.0" ry="5.0" fill="#5b3316" opacity="0.60" filter="url(#blur1)"/><g><circle cx="379" cy="621.500" r="12" fill="#2a2522"/><circle cx="379" cy="621.500" r="9.800" fill="#e6e2dc"/><circle cx="379" cy="621.500" r="7.500" fill="#b0a8a0"/><circle cx="379" cy="621.500" r="6.300" fill="#d8d2ca"/><circle cx="379" cy="621.500" r="2.600" fill="#4a4440"/><circle cx="432" cy="621.500" r="11.500" fill="#2a2522"/><circle cx="432" cy="621.500" r="9.500" fill="#e0dcd6"/><circle cx="432" cy="621.500" r="7.200" fill="#a8a098"/><circle cx="432" cy="621.500" r="6" fill="#cfc9c1"/><circle cx="432" cy="621.500" r="2.600" fill="#4a4440"/><path d="M360,604 Q358,596 368,596 L396,598 Q402,598 402,604 L402,610 Q380,604 362,612 Z" fill="#d9553a" /><path d="M385,594 L404,592 Q408,592 408,596 L404,600 L386,599 Z" fill="#b8402a" /><path d="M404,612 Q406,596 414,588 L420,584 L426,590 Q420,600 420,616 L408,622 Z" fill="#ebe6de" /><path d="M420,584 L424,580 L432,604 L436,618 L432,619 L424,598 Z" fill="#d9553a" /><path d="M408,582 L428,577 L429,579.500 L409,584.500 Z" fill="#2a2522" /><path d="M398,612 L420,612 L418,622 L400,622 Z" fill="#4a4540" /><path d="M386,610 L402,606 L402,612 L388,616 Z" fill="#ebe6de" /></g><ellipse cx="714.0" cy="508.0" rx="2.5" ry="3.0" fill="#3a2a20" /><rect x="709.0" y="511.0" width="10.0" height="15.0" fill="#4f9a4a" rx="3"/><rect x="711.0" y="525.0" width="3.0" height="13.0" fill="#3a2a20" /><rect x="715.0" y="525.0" width="3.0" height="11.0" fill="#3a2a20" /><path d="M700,541 L716,535 L718,537 L703,544 Z" fill="#5a5550" opacity=".8"/><rect x="757.0" y="536.0" width="15.0" height="20.0" fill="#3a3532" rx="2"/><rect x="771.0" y="533.0" width="9.0" height="23.0" fill="#4a4642" rx="3"/><ellipse cx="762.0" cy="540.0" rx="4.0" ry="6.0" fill="#7a5a50" /><ellipse cx="762.0" cy="558.0" rx="12.0" ry="2.5" fill="#5b3316" opacity="0.50" filter="url(#blur1)"/><ellipse cx="801.0" cy="507.0" rx="3.0" ry="3.0" fill="#3a2a20" /><rect x="796.0" y="509.0" width="11.0" height="15.0" fill="#c9502c" rx="3"/><ellipse cx="810.0" cy="505.0" rx="3.0" ry="3.0" fill="#2a201a" /><rect x="806.0" y="508.0" width="9.0" height="14.0" fill="#b8482a" rx="3"/><path d="M806,520 L820,524 L818,530 L810,528 L808,536 L804,536 Z" fill="#ebe8e4" /><rect x="815.0" y="508.0" width="6.0" height="20.0" fill="#25201e" rx="2"/><rect x="796.0" y="524.0" width="26.0" height="4.0" fill="#4a403a" /><path d="M857,526 L874,526 M858,526 L858,538 M873,526 L873,540" stroke="#2a2420" stroke-width="2" fill="none"/><ellipse cx="892.0" cy="514.0" rx="2.1" ry="2.4" fill="7" /><rect x="888.1" y="516.2" width="7.8" height="11.2" fill="#2f5a9a" rx="2.4"/><rect x="888.7" y="526.0" width="6.6" height="14.0" fill="#2a2420" rx="1.6"/><ellipse cx="890.0" cy="505.0" rx="5.0" ry="4.0" fill="#d9a82f" /><ellipse cx="888.0" cy="498.0" rx="6.0" ry="3.0" fill="#c8982a" /><ellipse cx="873.0" cy="624.0" rx="17.0" ry="4.0" fill="#5b3316" opacity="0.60" filter="url(#blur1)"/><ellipse cx="880.5" cy="555.5" rx="4.5" ry="5.0" fill="#1d1816" /><path d="M873,563 Q880,558 888,563 L891,582 L886,590 L874,590 Z" fill="#1d1a1c" /><path d="M875,588 L887,588 L886,600 L893,614 L890,616 L880,602 L877,620 L873,620 Z" fill="#1d1a1c" /><path d="M888,574 L892,592 L889,593 L885,580 Z" fill="#e8c8c0" /><path d="M868,582 L872,580 L876,596 L873,600 Z" fill="#5a3a22" /><rect x="870.0" y="619.0" width="9.0" height="3.0" fill="#d9a84a" rx="1.500"/><rect x="889.0" y="613.0" width="8.0" height="3.0" fill="#d9a84a" rx="1.500"/><ellipse cx="1042.0" cy="530.0" rx="3.5" ry="4.0" fill="#2a201a" /><path d="M1038,535 L1047,535 L1053,556 L1035,558 Z" fill="#d0603a" /><path d="M1039,540 L1046,540 L1049,552 L1037,553 Z" fill="#e8b060" opacity=".6"/><rect x="1038.0" y="527.0" width="8.0" height="7.0" fill="#e8e0d8" rx="2"/><ellipse cx="1045.0" cy="520.0" rx="4.0" ry="4.0" fill="#1d1816" /><rect x="1040.0" y="524.0" width="11.0" height="18.0" fill="#25201e" rx="3"/><ellipse cx="1084.0" cy="517.0" rx="3.0" ry="3.5" fill="#3a2a20" /><rect x="1079.0" y="521.0" width="10.0" height="19.0" fill="#58b06a" rx="3"/><rect x="1080.0" y="540.0" width="8.0" height="14.0" fill="#2a2a32" rx="2"/><ellipse cx="1021.0" cy="503.5" rx="1.6" ry="1.9" fill="5" /><rect x="1017.9" y="505.3" width="6.2" height="8.8" fill="#2a2a28" rx="1.8"/><rect x="1018.4" y="513.0" width="5.2" height="11.0" fill="#2a2a28" rx="1.2"/><ellipse cx="1068.0" cy="504.5" rx="1.6" ry="1.9" fill="6" /><rect x="1064.9" y="506.3" width="6.2" height="8.8" fill="#25201e" rx="1.8"/><rect x="1065.4" y="514.0" width="5.2" height="11.0" fill="#25201e" rx="1.2"/><rect x="964.0" y="505.0" width="7.0" height="23.0" fill="#e8e4e0" rx="3"/><rect x="960.0" y="510.0" width="6.0" height="30.0" fill="#1d1a1a" rx="2"/><path d="M1160,538 Q1175,532 1178,545 L1172,560 L1162,558 Z" fill="#25201e" /><path d="M1163,537 Q1176,534 1178,544 L1170,548 Z" fill="#e07a5a" /><ellipse cx="1188.0" cy="557.0" rx="8.0" ry="5.0" fill="#25282e" /><ellipse cx="1150.0" cy="559.0" rx="9.0" ry="3.0" fill="#3a2f22" /><ellipse cx="1168.0" cy="562.0" rx="8.0" ry="3.0" fill="#4a6a2a" /><rect x="1101.0" y="556.0" width="7.0" height="9.0" fill="#d9b03a" /><ellipse cx="1113.0" cy="560.0" rx="5.0" ry="6.0" fill="#2a2624" /><ellipse cx="1225.0" cy="572.0" rx="28.0" ry="3.5" fill="#5b3316" opacity="0.45" filter="url(#blur1)"/><ellipse cx="1218.0" cy="533.0" rx="3.5" ry="4.0" fill="#1d1816" /><rect x="1212.0" y="538.0" width="10.0" height="18.0" fill="#25201e" rx="3"/><path d="M1213,555 L1222,555 L1222,572 L1218,572 L1217,560 L1210,570 L1207,568 Z" fill="#1f1c1e" /><ellipse cx="1228.0" cy="530.0" rx="4.0" ry="4.5" fill="#1d1816" /><path d="M1223,536 L1233,536 L1234,552 L1223,552 Z" fill="#b85a3a" /><path d="M1224,551 L1234,551 L1237,572 L1233,572 L1229,558 L1216,570 L1213,567 Z" fill="#f1eeea" /><ellipse cx="1239.0" cy="531.0" rx="4.0" ry="4.0" fill="#e8a08a" /><path d="M1234,536 L1245,536 L1249,560 L1234,560 Z" fill="#d8582e" /><path d="M1236,540 L1243,540 L1246,554 L1236,556 Z" fill="#e8a84a" opacity=".6"/><rect x="1236.0" y="554.0" width="7.0" height="14.0" fill="#2f7ac8" rx="2"/><rect x="1245.0" y="560.0" width="2.5" height="12.0" fill="#5a3a2a" /></g></svg><!--/SCENE-->
<div id="cap">VIEW FROM AV. ACORDOS DE LUSAKA</div>
<div id="presenter">Francesco Bottaro (Ospite)</div>
<div id="top">
  <div id="time">01:20:24</div>
  <div id="req"><span>Richiedi controllo</span></div>
  <div class="sep" style="left:921px"></div>
  <div class="sep" style="left:1147px"></div>

  <svg id="ic-people" style="position:absolute;left:946px;top:18px" width="26" height="26" viewBox="946 18 26 26" fill="none" stroke="#e9e7e7" stroke-width="1.5" stroke-linecap="round" stroke-linejoin="round">
    <circle cx="954.1" cy="27.7" r="2.6"/>
    <circle cx="962.8" cy="25.3" r="2.8"/>
    <path d="M956.3 33.9H952a1.4 1.4 0 0 0-1.4 1.4v1.6a3 3 0 0 0 3 2.9h2.4"/>
    <path d="M960.1 30.8h5.4a1.4 1.4 0 0 1 1.4 1.4v3.5a4.05 4.05 0 0 1-8.1 0v-3.5a1.4 1.4 0 0 1 1.3-1.4z"/>
  </svg>
  <svg id="ic-chat" style="position:absolute;left:998px;top:18px" width="26" height="26" viewBox="998 18 26 26" fill="none" stroke="#e9e7e7" stroke-width="1.5" stroke-linecap="round" stroke-linejoin="round">
    <path d="M1003.6 23.8h12.8a1.7 1.7 0 0 1 1.7 1.7v14.4l-4.3-4.2h-10.2a1.7 1.7 0 0 1-1.7-1.7v-8.5a1.7 1.7 0 0 1 1.7-1.7z"/>
    <path d="M1005.6 28.1h8.6M1005.6 31.9h5.6"/>
  </svg>
  <svg id="ic-hand" style="position:absolute;left:1046px;top:18px" width="26" height="26" viewBox="1046 18 26 26" fill="none" stroke="#e9e7e7" stroke-width="1.4" stroke-linecap="round" stroke-linejoin="round">
    <path d="M1051.7 33.8v-7a1.4 1.4 0 0 1 2.8 0v-2.4a1.4 1.4 0 0 1 2.8 0v-1.5a1.4 1.4 0 0 1 2.8 0v1.5a1.4 1.4 0 0 1 2.8 0v8.6l1.7-1.9c1-1.1 2.7-.1 2.3 1.1-.2.5-.5.9-.8 1.300l-4.400 6.200a5.500 5.500 0 0 1-4.500 2.100c-3.100 0-5.500-2.300-5.500-5.400z"/>
    <path d="M1054.5 26.800v3.600M1057.3 24.400v5.800M1060.100 24.400v5.800"/>
  </svg>
  <svg id="ic-more" style="position:absolute;left:1096px;top:26px" width="26" height="10" viewBox="1096 26 26 10" fill="#e9e7e7">
    <circle cx="1101.3" cy="31.3" r="2.5"/><circle cx="1109.3" cy="31.3" r="2.5"/><circle cx="1117.2" cy="31.3" r="2.5"/>
  </svg>
  <svg id="ic-cam" style="position:absolute;left:1172px;top:18px" width="28" height="26" viewBox="1172 18 28 26">
    <rect x="1175" y="24" width="14.600" height="14" rx="2" fill="#f2f0f0"/>
    <path d="M1190.700 29.300l4.500-3.600a.6.600 0 0 1 1 .5v9.600a.6.600 0 0 1-1 .5l-4.500-3.600z" fill="#f2f0f0"/>
    <path d="M1173.400 39.900L1194.400 19.400" stroke="#1d191a" stroke-width="2.400" fill="none"/>
    <path d="M1174.900 41.400L1195.900 20.900" stroke="#f2f0f0" stroke-width="1.500" stroke-linecap="round" fill="none"/>
  </svg>
  <svg id="ic-mic" style="position:absolute;left:1222px;top:18px" width="28" height="26" viewBox="1222 18 28 26">
    <rect x="1231.600" y="21" width="7.400" height="13.200" rx="3.700" fill="#f2f0f0"/>
    <path d="M1228.800 30.800a6.500 6.500 0 0 0 13 0M1235.300 37.500v3.700" stroke="#f2f0f0" stroke-width="1.700" stroke-linecap="round" fill="none"/>
    <path d="M1223.500 39.900L1244.500 19.400" stroke="#1d191a" stroke-width="2.400" fill="none"/>
    <path d="M1225 41.400L1246 20.900" stroke="#f2f0f0" stroke-width="1.500" stroke-linecap="round" fill="none"/>
  </svg>
  <svg id="ic-share" style="position:absolute;left:1272px;top:18px" width="28" height="26" viewBox="1272 18 28 26" fill="none" stroke="#f2f0f0" stroke-linecap="round" stroke-linejoin="round">
    <path d="M1281 36.800h-3.400a1.800 1.800 0 0 1-1.800-1.800v-9.800a1.800 1.800 0 0 1 1.800-1.800h16a1.800 1.800 0 0 1 1.800 1.800v9.800a1.800 1.800 0 0 1-1.800 1.800h-3.400" stroke-width="1.800"/>
    <path d="M1285.600 40.800v-11.400M1280.800 33.600l4.800-4.800 4.800 4.800" stroke-width="2.400"/>
  </svg>
  <div id="leave"><svg style="position:absolute;left:20px;top:10.400px" width="24" height="11" viewBox="0 0 24 12" preserveAspectRatio="none"><path d="M12 1.600c-4.300 0-8.300 1.300-10.300 3.600-.9 1-1 2.400-.6 3.700l.3.900c.3.800 1.100 1.300 2 1.100l2.900-.6c.8-.2 1.300-.8 1.400-1.600l.2-1.700c2.600-.9 5.500-.9 8.200 0l.2 1.700c.1.800.700 1.400 1.400 1.600l2.900.6c.9.200 1.700-.3 2-1.100l.3-.900c.4-1.300.3-2.700-.6-3.700-2-2.300-6-3.600-10.300-3.600z" fill="#fff"/></svg><span>Abbandona</span></div>
</div>
<div id="strip">
  <div class="av" style="left:58.800px;top:27.200px;width:44.500px;height:44.500px;line-height:44.500px;background:#5d61b4;color:#fff;font-size:14.200px;font-weight:bold;-webkit-text-stroke:0"><b style="transform:scaleX(1);font-weight:bold">+39</b></div>
  <div id="sel"></div>
  <div class="av" style="left:145.500px;background:#fbd8d2;color:#8e3526"><b style="transform:scaleX(0.870)">SP</b></div>
  <div class="av" style="left:233px;background:#c8e2e8;color:#0c4751"><b style="transform:scaleX(1.045)">MI</b></div>
  <div class="av" style="left:320.500px;background:#fbc8db;color:#6d1040"><b style="transform:scaleX(0.940)">AC</b></div>
  <div class="av" style="left:408px;background:#fde1ce;color:#7d4a12"><b style="transform:scaleX(0.930)">AG</b></div>
  <div class="av" id="ph1" style="left:495.700px;background:#6a6470"><svg width="46.500" height="46.500" viewBox="0 0 46.500 46.500" style="position:absolute;left:0;top:0"><defs><clipPath id="c1"><circle cx="23.250" cy="23.250" r="23.250"/></clipPath><filter id="b1"><feGaussianBlur stdDeviation="1.300"/></filter></defs><g clip-path="url(#c1)"><rect width="47" height="47" fill="#a9a9b8"/><g filter="url(#b1)"><ellipse cx="9" cy="14" rx="4" ry="3" fill="#4c4560"/><ellipse cx="36" cy="12" rx="5" ry="3" fill="#3f3450"/><ellipse cx="8" cy="24" rx="3" ry="6" fill="#5a4e70"/><ellipse cx="40" cy="26" rx="4" ry="5" fill="#8a6a8c"/><ellipse cx="18" cy="5" rx="6" ry="3" fill="#c4c6cc"/><ellipse cx="4" cy="33" rx="4" ry="8" fill="#e0d0b0"/><ellipse cx="42" cy="36" rx="6" ry="6" fill="#d8ccd0"/><ellipse cx="24" cy="19" rx="13.500" ry="13" fill="#dcb878"/><ellipse cx="15" cy="26" rx="4" ry="7" fill="#c89858"/><ellipse cx="33" cy="25" rx="4" ry="8" fill="#d8b070"/><ellipse cx="25" cy="21" rx="7.500" ry="9" fill="#e0a888"/><ellipse cx="25" cy="17" rx="5" ry="2" fill="#c08a6a"/><path d="M10 47 L12 33 Q24 28 34 33 L38 47Z" fill="#e8b8a0"/><ellipse cx="30" cy="36" rx="5" ry="5" fill="#f0e0c0"/><path d="M5 47 L7 34 L13 33 L16 47Z" fill="#3a1822"/><path d="M31 47 L34 36 L38 38 L38 47Z" fill="#3a1822"/></g></g></svg></div>
  <div class="tile" style="left:562.500px"><div class="av" style="left:70.500px;background:#f5cfdf;color:#5c1238"><b style="transform:scaleX(0.917)">NF</b></div><div class="nm"><span style="transform:scaleX(0.995)">Niccolò Maria Fioretto</span><svg class="m" style="left:148.3px" width="14" height="15" viewBox="0 0 14 15"><rect x="4.600" y=".8" width="4.400" height="8" rx="2.200" fill="#e8e6e6"/><path d="M2.800 6.600a4 4 0 0 0 8 0M6.800 10.800v2.400" stroke="#e8e6e6" stroke-width="1.100" fill="none" stroke-linecap="round"/><path d="M.2 13.200L12.700.2" stroke="#343434" stroke-width="1.700"/><path d="M.9 13.900L13.400.9" stroke="#e8e6e6" stroke-width="1.100" stroke-linecap="round"/></svg></div></div>
  <div class="tile" style="left:750px"><div class="av" id="ph2" style="left:70.300px;background:#55595a"><svg width="46.500" height="46.500" viewBox="0 0 46.500 46.500" style="position:absolute;left:0;top:0"><defs><clipPath id="c2"><circle cx="23.250" cy="23.250" r="23.250"/></clipPath><filter id="b2"><feGaussianBlur stdDeviation="1"/></filter></defs><g clip-path="url(#c2)"><rect width="47" height="47" fill="#c4cac8"/><g filter="url(#b2)"><rect x="10" y="0" width="18" height="20" fill="#9fb0c0"/><rect x="28" y="0" width="20" height="34" fill="#0b0716"/><path d="M0 47 L2 33 Q14 27 22 29 Q36 30 44 36 L47 47Z" fill="#6a7370"/><ellipse cx="17.500" cy="17" rx="7.500" ry="9.500" fill="#c89a84"/><path d="M9.500 15 Q10 6 18 6.500 Q25 7 25 14 Q20 10 14 11.500 Q11 12 11 17Z" fill="#2a221e"/><ellipse cx="17" cy="27.500" rx="5" ry="3" fill="#a07864"/><path d="M12 44 Q16 36 26 37 L38 39 L38 43 L24 45Z" fill="#e8c8c0"/><rect x="22" y="39.500" width="17" height="2.500" fill="#f4ecec"/><path d="M12 47 L14 42 L36 43 L36 47Z" fill="#a04848"/></g></g></svg></div><div class="nm"><span style="transform:scaleX(0.952)">Gabriele Pasqui</span><svg class="m" style="left:111.1px" width="14" height="15" viewBox="0 0 14 15"><rect x="4.600" y=".8" width="4.400" height="8" rx="2.200" fill="#e8e6e6"/><path d="M2.800 6.600a4 4 0 0 0 8 0M6.800 10.800v2.400" stroke="#e8e6e6" stroke-width="1.100" fill="none" stroke-linecap="round"/><path d="M.2 13.200L12.700.2" stroke="#343434" stroke-width="1.700"/><path d="M.9 13.900L13.400.9" stroke="#e8e6e6" stroke-width="1.100" stroke-linecap="round"/></svg></div></div>
  <div class="tile" style="left:937.500px"><div class="av" style="left:70.500px;background:#e3efd3;color:#2f6a2a"><b style="transform:scaleX(1.020)">CM</b></div><div class="nm"><span style="transform:scaleX(1.004)">Camillo Magni</span><svg class="m" style="left:105.4px" width="14" height="15" viewBox="0 0 14 15"><rect x="4.600" y=".8" width="4.400" height="8" rx="2.200" fill="#e8e6e6"/><path d="M2.800 6.600a4 4 0 0 0 8 0M6.800 10.800v2.400" stroke="#e8e6e6" stroke-width="1.100" fill="none" stroke-linecap="round"/><path d="M.2 13.200L12.700.2" stroke="#343434" stroke-width="1.700"/><path d="M.9 13.900L13.400.9" stroke="#e8e6e6" stroke-width="1.100" stroke-linecap="round"/></svg></div></div>
  <div class="tile" style="left:1125px"><div class="av" style="left:70.500px;background:#cdeeee;color:#0b6b6d"><b style="transform:scaleX(1.120)">MM</b></div><div class="nm"><span style="transform:scaleX(0.993)">Manfredi Mazziotta (O...</span><svg class="m" style="left:158.5px" width="14" height="15" viewBox="0 0 14 15"><rect x="4.600" y=".8" width="4.400" height="8" rx="2.200" fill="#e8e6e6"/><path d="M2.800 6.600a4 4 0 0 0 8 0M6.800 10.800v2.400" stroke="#e8e6e6" stroke-width="1.100" fill="none" stroke-linecap="round"/><path d="M.2 13.200L12.700.2" stroke="#343434" stroke-width="1.700"/><path d="M.9 13.900L13.400.9" stroke="#e8e6e6" stroke-width="1.100" stroke-linecap="round"/></svg></div></div>
  <div class="tile" id="fb" style="left:1312.500px"><div id="ring"></div><div class="av" style="left:70.500px;top:26.600px;background:#e7e5f1;color:#2a2440;box-shadow:0 3px 4px rgba(10,8,20,.6)"><b style="transform:scaleX(0.826)">FB</b></div><div class="nm"><span style="transform:scaleX(0.956)">Francesco Bottaro (Ospite)</span></div></div>
</div>
</body>
</html>
